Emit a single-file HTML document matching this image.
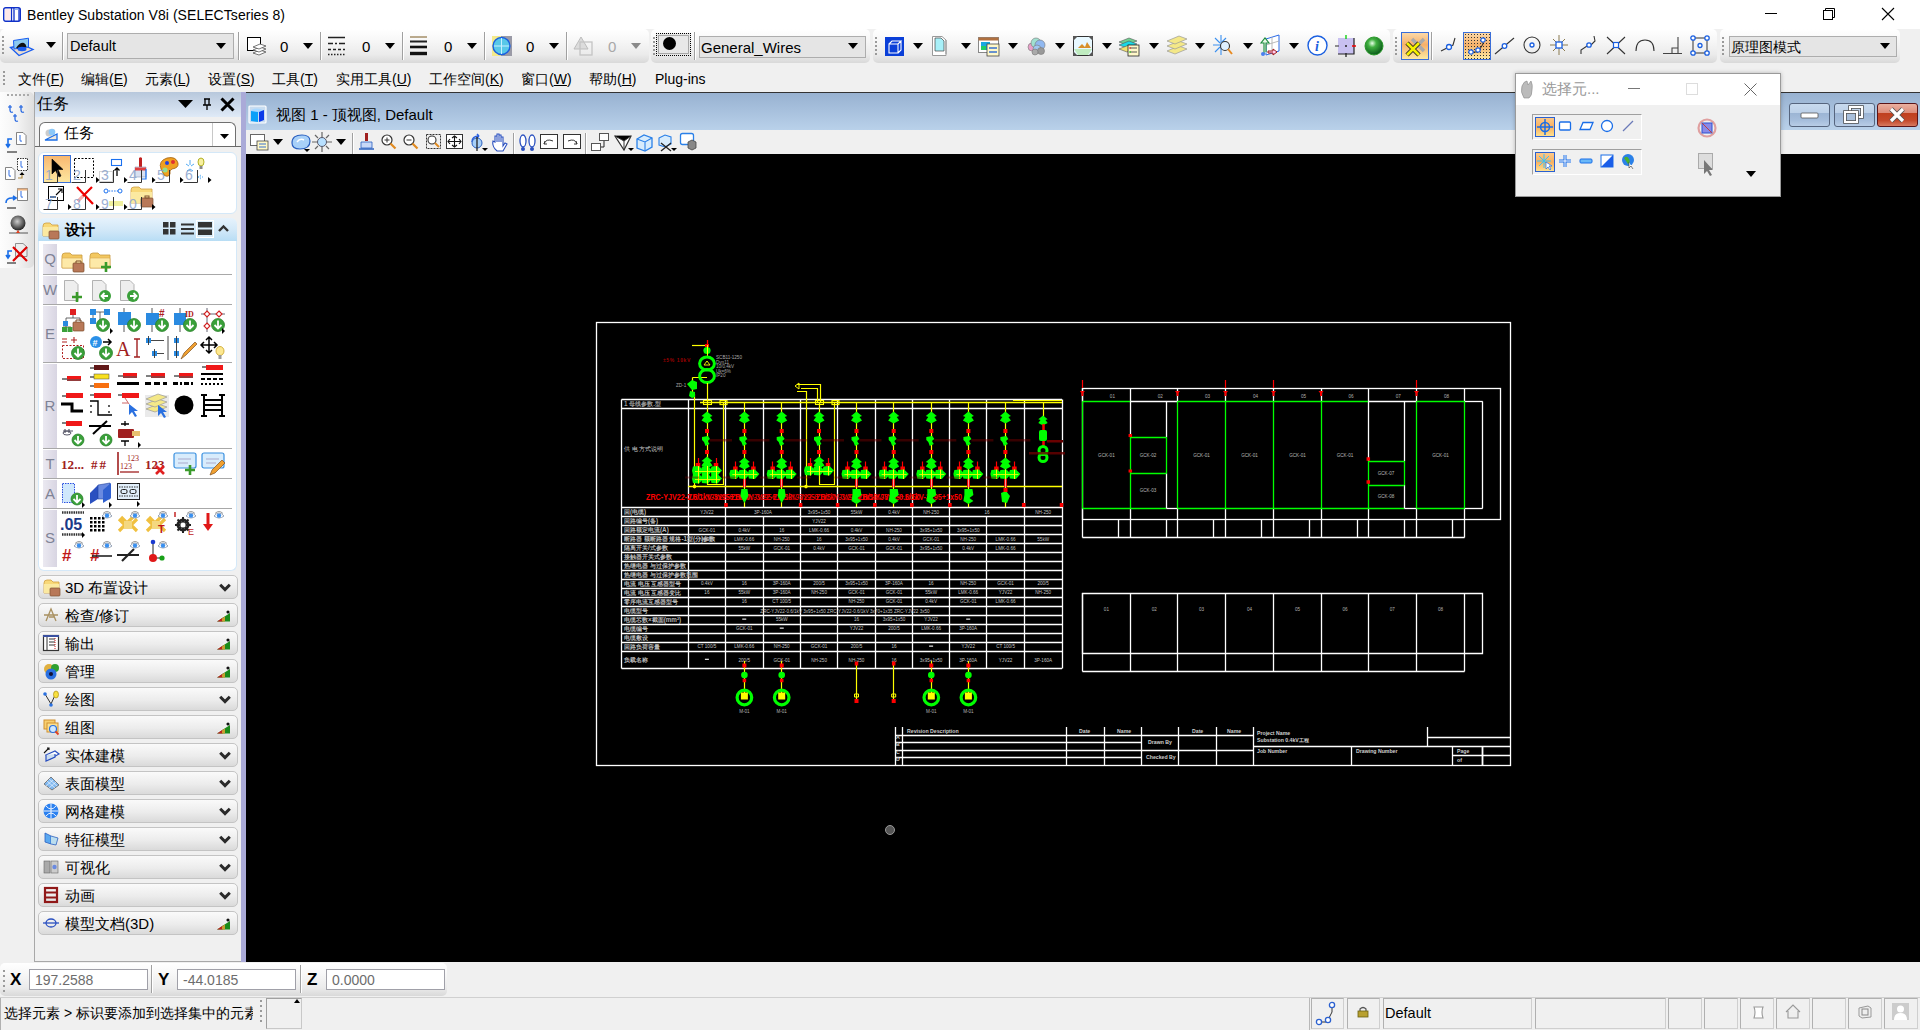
<!DOCTYPE html>
<html><head><meta charset="utf-8"><style>
*{margin:0;padding:0;box-sizing:border-box}
html,body{width:1920px;height:1030px;overflow:hidden;background:#f0f0f0;font-family:"Liberation Sans",sans-serif;color:#000}
.a{position:absolute}
svg.a{overflow:visible}
.tg{position:absolute;top:29px;height:34px;border-radius:5px;background:linear-gradient(#ffffff,#f8f8f8 30%,#ebebeb 75%,#d9d9d9)}
.mi{position:absolute;top:7px;font-size:14px;white-space:nowrap}
.cb{position:absolute;background:#e5e5e5;border:1px solid #adadad;font-size:15px;white-space:nowrap}
.num{position:absolute;top:38px;font-size:15px}
.sec{position:absolute;left:38px;width:200px;height:24px;border:1px solid #c4c4c4;border-radius:5px;background:linear-gradient(#fafafa,#ececec 55%,#dadada);font-size:15px}
.sec span{position:absolute;left:26px;top:3px;white-space:nowrap}
.chev{position:absolute;left:180px;top:6px}
.lt{position:absolute;left:5px;width:14px;color:#7f8396;font-size:15px;text-align:center}
.sbox{position:absolute;top:998px;height:31px;border:1px solid #c8c8c8;border-top-color:#a8a8a8;border-left-color:#a8a8a8}
</style></head><body>
<div class="a" style="left:0;top:0;width:1920px;height:29px;background:#fff"></div>
<svg class="a" style="left:3px;top:7px" width="18" height="15" viewBox="0 0 18 15"><rect x="0.7" y="0.7" width="16.6" height="13.6" rx="2" fill="#fff" stroke="#1030c8" stroke-width="1.4"/><path d="M8.5 0.7V14.3M11 1V14M16 1V14" stroke="#1030c8" stroke-width="1.3"/><rect x="2" y="2" width="5.5" height="11" fill="#fde8e8"/><rect x="11.5" y="1.5" width="4" height="1.5" fill="#90b0f0"/></svg>
<div class="a" style="left:27px;top:6.5px;font-size:14px;white-space:nowrap;letter-spacing:0.05px">Bentley Substation V8i (SELECTseries 8)</div>
<div class="a" style="left:1765px;top:13px;width:12px;height:1px;background:#000"></div>
<svg class="a" style="left:1823px;top:8px" width="12" height="12" viewBox="0 0 12 12"><rect x="0.5" y="2.5" width="9" height="9" fill="none" stroke="#000"/><path d="M2.5 2.5V0.5H11.5V9.5H9.5" fill="none" stroke="#000"/></svg>
<svg class="a" style="left:1882px;top:8px" width="12" height="12" viewBox="0 0 12 12"><path d="M0 0L12 12M12 0L0 12" stroke="#000" stroke-width="1.1"/></svg>
<div class="a" style="left:0;top:29px;width:1920px;height:34px;background:#f0f0f0"></div>
<div class="tg" style="left:0px;width:649px"></div>
<div class="tg" style="left:651px;width:219px"></div>
<div class="tg" style="left:873px;width:517px"></div>
<div class="tg" style="left:1393px;width:324px"></div>
<div class="tg" style="left:1720px;width:180px"></div>
<div class="a" style="left:2px;top:36px;width:2px;height:2px;background:#9a9a9a"></div><div class="a" style="left:2px;top:40px;width:2px;height:2px;background:#9a9a9a"></div><div class="a" style="left:2px;top:44px;width:2px;height:2px;background:#9a9a9a"></div><div class="a" style="left:2px;top:48px;width:2px;height:2px;background:#9a9a9a"></div><div class="a" style="left:2px;top:52px;width:2px;height:2px;background:#9a9a9a"></div>
<svg class="a" style="left:9px;top:37px" width="25" height="20" viewBox="0 0 25 20"><path d="M1.5 10.5L10 18.5L24 12.5L14 8Z" fill="#eadccc" stroke="#1a5ef0" stroke-width="1.3"/><path d="M4.5 3.5L19.5 1.2V10L5 12Z" fill="#8ccaf0" stroke="#1a5ef0" stroke-width="1"/><path d="M7 11Q11 5 15 6Q17 7 17.5 10L10 12Z" fill="#111"/><ellipse cx="13" cy="12" rx="4.5" ry="2.2" fill="#1a5ef0"/></svg>
<div class="a" style="left:46px;top:42px;width:0;height:0;border-left:5px solid transparent;border-right:5px solid transparent;border-top:6px solid #000"></div>
<div class="a" style="left:62px;top:32px;width:2px;height:28px;border-left:1px solid #a0a0a0;border-right:1px solid #fff"></div>
<div class="cb" style="left:67px;top:33px;width:167px;height:26px"><span class="a" style="left:2px;top:4px;font-size:14.5px">Default</span></div>
<div class="a" style="left:216px;top:43px;width:0;height:0;border-left:5px solid transparent;border-right:5px solid transparent;border-top:6px solid #000"></div>
<div class="a" style="left:238px;top:32px;width:2px;height:28px;border-left:1px solid #a0a0a0;border-right:1px solid #fff"></div>
<svg class="a" style="left:247px;top:37px" width="20" height="20" viewBox="0 0 20 20"><rect x="0.5" y="0.5" width="13" height="13" fill="#fff" stroke="#000"/><g fill="#fff" stroke="#555" stroke-width="0.8"><path d="M6 16l7-3 6 2-7 3z"/><path d="M6 13l7-3 6 2-7 3z"/><path d="M6 10l7-3 6 2-7 3z"/></g></svg>
<div class="num" style="left:280px">0</div>
<div class="a" style="left:303px;top:43px;width:0;height:0;border-left:5px solid transparent;border-right:5px solid transparent;border-top:6px solid #000"></div>
<div class="a" style="left:320px;top:32px;width:2px;height:28px;border-left:1px solid #a0a0a0;border-right:1px solid #fff"></div>
<svg class="a" style="left:328px;top:36px" width="18" height="20" viewBox="0 0 18 20"><g stroke="#222" stroke-width="1.5"><path d="M0 1.5H17"/><path d="M0 7.5H5M7 7.5H9M11 7.5H17" /><path d="M0 13.5H3M5 13.5H8M10 13.5H13M15 13.5H17"/><path d="M0 18.5H17" stroke-dasharray="1.5 1.5"/></g></svg>
<div class="num" style="left:362px">0</div>
<div class="a" style="left:385px;top:43px;width:0;height:0;border-left:5px solid transparent;border-right:5px solid transparent;border-top:6px solid #000"></div>
<div class="a" style="left:402px;top:32px;width:2px;height:28px;border-left:1px solid #a0a0a0;border-right:1px solid #fff"></div>
<svg class="a" style="left:410px;top:36px" width="18" height="20" viewBox="0 0 18 20"><path d="M0 1H17" stroke="#7a5a20" stroke-width="1"/><path d="M0 5.5H17" stroke="#222" stroke-width="2"/><path d="M0 11H17" stroke="#111" stroke-width="2.6"/><path d="M0 17.5H17" stroke="#111" stroke-width="3.4"/></svg>
<div class="num" style="left:444px">0</div>
<div class="a" style="left:467px;top:43px;width:0;height:0;border-left:5px solid transparent;border-right:5px solid transparent;border-top:6px solid #000"></div>
<div class="a" style="left:484px;top:32px;width:2px;height:28px;border-left:1px solid #a0a0a0;border-right:1px solid #fff"></div>
<svg class="a" style="left:492px;top:36px" width="21" height="21" viewBox="0 0 21 21"><rect x="0" y="0" width="20" height="20" fill="#f3e98a"/><rect x="9" y="0" width="11" height="20" fill="#9a9aa6"/><circle cx="9.5" cy="10" r="8.5" fill="#58c8e8" stroke="#1a5fe0" stroke-width="1.4"/><path d="M9.5 2v16M2 10h15" stroke="#c8f0ff" stroke-width="1"/></svg>
<div class="num" style="left:526px">0</div>
<div class="a" style="left:549px;top:43px;width:0;height:0;border-left:5px solid transparent;border-right:5px solid transparent;border-top:6px solid #000"></div>
<div class="a" style="left:566px;top:32px;width:2px;height:28px;border-left:1px solid #a0a0a0;border-right:1px solid #fff"></div>
<svg class="a" style="left:573px;top:36px" width="21" height="21" viewBox="0 0 21 21"><path d="M8 1L1 13H15Z" fill="#dcdcdc" stroke="#bdbdbd"/><rect x="7" y="6" width="12" height="13" fill="none" stroke="#c4c4c4" stroke-width="1.3"/></svg>
<div class="num" style="left:608px;color:#a8a8a8">0</div>
<div class="a" style="left:631px;top:43px;width:0;height:0;border-left:5px solid transparent;border-right:5px solid transparent;border-top:6px solid #8a8a8a"></div>
<div class="a" style="left:653px;top:37px;width:2px;height:2px;background:#9a9a9a"></div><div class="a" style="left:653px;top:41px;width:2px;height:2px;background:#9a9a9a"></div><div class="a" style="left:653px;top:45px;width:2px;height:2px;background:#9a9a9a"></div><div class="a" style="left:653px;top:49px;width:2px;height:2px;background:#9a9a9a"></div><div class="a" style="left:653px;top:53px;width:2px;height:2px;background:#9a9a9a"></div>
<div class="a" style="left:656px;top:33px;width:35px;height:23px;border:1px dotted #000;background:#e8e8e8"></div>
<div class="a" style="left:658px;top:35px;width:31px;height:19px;border:1px solid #a8a8a8"></div>
<div class="a" style="left:663px;top:37px;width:13px;height:13px;border-radius:50%;background:#000"></div>
<div class="a" style="left:694px;top:32px;width:2px;height:28px;border-left:1px solid #a0a0a0;border-right:1px solid #fff"></div>
<div class="cb" style="left:699px;top:36px;width:167px;height:22px"><span class="a" style="left:1px;top:2px">General_Wires</span></div>
<div class="a" style="left:848px;top:43px;width:0;height:0;border-left:5px solid transparent;border-right:5px solid transparent;border-top:6px solid #000"></div>
<div class="a" style="left:875px;top:37px;width:2px;height:2px;background:#9a9a9a"></div><div class="a" style="left:875px;top:41px;width:2px;height:2px;background:#9a9a9a"></div><div class="a" style="left:875px;top:45px;width:2px;height:2px;background:#9a9a9a"></div><div class="a" style="left:875px;top:49px;width:2px;height:2px;background:#9a9a9a"></div><div class="a" style="left:875px;top:53px;width:2px;height:2px;background:#9a9a9a"></div>
<svg class="a" style="left:885px;top:37px" width="20" height="19" viewBox="0 0 20 19"><rect x="0" y="0" width="19" height="19" fill="#0a3fd8"/><path d="M4 7h9v9H4zM4 7l3-3h9l-3 3M13 16l3-3V4" fill="none" stroke="#fff" stroke-width="1.1"/></svg>
<div class="a" style="left:913px;top:43px;width:0;height:0;border-left:5px solid transparent;border-right:5px solid transparent;border-top:6px solid #000"></div>
<svg class="a" style="left:932px;top:36px" width="20" height="21" viewBox="0 0 20 21"><path d="M0.5 0.5H10L14 4V19.5H0.5Z" fill="#fff" stroke="#999"/><path d="M3 2H9L12 5V15H3Z" fill="#a8f0f8" stroke="#444" stroke-width="0.7"/><path d="M14 4V18" stroke="#999" /><path d="M6 3h6l6 6v12H6" fill="#fff" stroke="#999" opacity="0.0"/></svg>
<div class="a" style="left:961px;top:43px;width:0;height:0;border-left:5px solid transparent;border-right:5px solid transparent;border-top:6px solid #000"></div>
<svg class="a" style="left:978px;top:37px" width="22" height="20" viewBox="0 0 22 20"><rect x="0.5" y="0.5" width="20" height="15" fill="#fff" stroke="#888"/><rect x="0.5" y="0.5" width="20" height="3" fill="#b07040"/><rect x="3" y="5" width="9" height="8" fill="#1aa8e0"/><rect x="3" y="9" width="5" height="4" fill="#22cc66"/><rect x="9" y="7" width="12" height="12" fill="#fff8c8" stroke="#444" stroke-width="0.8"/><path d="M11 11h8M11 15h8" stroke="#3870d0" stroke-width="1.4"/></svg>
<div class="a" style="left:1008px;top:43px;width:0;height:0;border-left:5px solid transparent;border-right:5px solid transparent;border-top:6px solid #000"></div>
<svg class="a" style="left:1026px;top:37px" width="20" height="19" viewBox="0 0 20 19"><g stroke="#777" stroke-width="0.6"><circle cx="6" cy="10" r="4" fill="#e8a0c8"/><circle cx="10" cy="6" r="5" fill="#a0e0d0"/><circle cx="14" cy="8" r="5" fill="#90b8f0"/><circle cx="11" cy="12" r="4" fill="#a0c8f0"/><circle cx="15" cy="14" r="3.5" fill="#999"/><circle cx="9" cy="15" r="3" fill="#aaa"/></g></svg>
<div class="a" style="left:1055px;top:43px;width:0;height:0;border-left:5px solid transparent;border-right:5px solid transparent;border-top:6px solid #000"></div>
<svg class="a" style="left:1073px;top:36px" width="20" height="20" viewBox="0 0 20 20"><rect x="0.5" y="0.5" width="19" height="19" fill="#e8f8ff" stroke="#333"/><path d="M0 0l5 0-5 5zM20 0l-5 0 5 5zM0 20l5 0-5-5zM20 20l-5 0 5-5z" fill="#555"/><path d="M5 12l4-4 3 3 2-5 4 6z" fill="#d8902a"/><path d="M1 13h18l-4 6H5z" fill="#c0ecc0"/></svg>
<div class="a" style="left:1102px;top:43px;width:0;height:0;border-left:5px solid transparent;border-right:5px solid transparent;border-top:6px solid #000"></div>
<svg class="a" style="left:1118px;top:36px" width="22" height="21" viewBox="0 0 22 21"><path d="M1 6l10-4 8 3-10 4z" fill="#70d090" stroke="#555" stroke-width="0.6"/><path d="M1 9l10-4 8 3-10 4z" fill="#18d8e8" stroke="#555" stroke-width="0.6"/><path d="M1 13l10-4 8 3-10 4z" fill="#f0e070" stroke="#555" stroke-width="0.6"/><rect x="10" y="9" width="11" height="11" fill="#fff8c8" stroke="#222" stroke-width="0.8"/><path d="M12 12h7M12 16h7" stroke="#555"/><circle cx="12" cy="12" r="0.8" fill="red"/><circle cx="12" cy="16" r="0.8" fill="#0c0"/></svg>
<div class="a" style="left:1149px;top:43px;width:0;height:0;border-left:5px solid transparent;border-right:5px solid transparent;border-top:6px solid #000"></div>
<svg class="a" style="left:1166px;top:36px" width="22" height="20" viewBox="0 0 22 20"><g fill="#f4e888" stroke="#999" stroke-width="0.7"><path d="M1 15l12-5 8 3-12 5z"/><path d="M1 10l12-5 8 3-12 5z"/><path d="M1 5l12-5 8 3-12 5z"/></g></svg>
<div class="a" style="left:1195px;top:43px;width:0;height:0;border-left:5px solid transparent;border-right:5px solid transparent;border-top:6px solid #000"></div>
<svg class="a" style="left:1212px;top:34px" width="22" height="23" viewBox="0 0 22 23"><path d="M9 1v20M1 11h8M3 4l5 5M3 18l5-5M14 4l-4 4" stroke="#3a90f0" stroke-width="1.1"/><circle cx="13" cy="12" r="4.5" fill="#dff0ff" stroke="#333" stroke-width="1.1"/><path d="M16 15l4 5" stroke="#e88a20" stroke-width="2"/></svg>
<div class="a" style="left:1243px;top:43px;width:0;height:0;border-left:5px solid transparent;border-right:5px solid transparent;border-top:6px solid #000"></div>
<svg class="a" style="left:1260px;top:34px" width="20" height="23" viewBox="0 0 20 23"><path d="M6 5l13-4v16l-13 4z" fill="#fff" stroke="#2a6ae8" stroke-width="1"/><path d="M12 3v16M6 11l13-4" stroke="#aaa" stroke-width="0.8"/><path d="M4 20V9H1l4-5 4 5H6v9" fill="#e8f8e8" stroke="#1a8a3a" stroke-width="1.1"/><path d="M8 17h5v-2l4 3-4 3v-2H8z" fill="#fce" stroke="#a01818" stroke-width="1"/><circle cx="3" cy="20" r="2" fill="#4a80f0"/></svg>
<div class="a" style="left:1289px;top:43px;width:0;height:0;border-left:5px solid transparent;border-right:5px solid transparent;border-top:6px solid #000"></div>
<svg class="a" style="left:1307px;top:35px" width="21" height="21" viewBox="0 0 21 21"><circle cx="10.5" cy="10.5" r="9.5" fill="#fff" stroke="#1a5fe0" stroke-width="1.4"/><text x="8" y="16" font-family="Liberation Serif" font-style="italic" font-weight="bold" font-size="14" fill="#1a5fe0">i</text></svg>
<svg class="a" style="left:1335px;top:35px" width="21" height="22" viewBox="0 0 21 22"><rect x="3" y="3" width="16" height="16" fill="#c8c0f0"/><path d="M19 3v16H3" fill="none" stroke="#222" stroke-width="1.2"/><path d="M11 0v4" stroke="#0c0" stroke-width="1.3"/><path d="M17 11h4" stroke="#e00" stroke-width="1.5"/><path d="M0 11h4" stroke="#555" stroke-width="1.3"/><path d="M11 18v4" stroke="#222" stroke-width="1.3"/><circle cx="11" cy="11" r="1" fill="#222"/></svg>
<svg class="a" style="left:1364px;top:36px" width="20" height="20" viewBox="0 0 20 20"><defs><radialGradient id="gg" cx="40%" cy="35%" r="65%"><stop offset="0" stop-color="#e8ffe8"/><stop offset="0.35" stop-color="#40b040"/><stop offset="1" stop-color="#0a5a1a"/></radialGradient></defs><circle cx="10" cy="10" r="9" fill="url(#gg)" stroke="#2a9a2a"/></svg>
<div class="a" style="left:1395px;top:37px;width:2px;height:2px;background:#9a9a9a"></div><div class="a" style="left:1395px;top:41px;width:2px;height:2px;background:#9a9a9a"></div><div class="a" style="left:1395px;top:45px;width:2px;height:2px;background:#9a9a9a"></div><div class="a" style="left:1395px;top:49px;width:2px;height:2px;background:#9a9a9a"></div><div class="a" style="left:1395px;top:53px;width:2px;height:2px;background:#9a9a9a"></div>
<div class="a" style="left:1401px;top:32px;width:28px;height:28px;border:1px solid #3a6ed8;background:linear-gradient(#fbd9a8,#f6b06a 45%,#fde9a0)"></div>
<svg class="a" style="left:1404px;top:35px" width="22" height="22" viewBox="0 0 22 22"><path d="M8 4l12 12M20 4L8 16" stroke="#aaa" stroke-width="3.5"/><path d="M3 8l12 12M15 8L3 20" stroke="#222" stroke-width="4.5"/><path d="M3 8l12 12M15 8L3 20" stroke="#f4f000" stroke-width="2.8"/></svg>
<div class="a" style="left:1431px;top:32px;width:2px;height:28px;border-left:1px solid #a0a0a0;border-right:1px solid #fff"></div>
<svg class="a" style="left:1441px;top:37px" width="17" height="17" viewBox="0 0 17 17"><path d="M0 14l8-4 4-2 2-7" fill="none" stroke="#333" stroke-width="1.1"/><circle cx="8" cy="10" r="2.5" fill="#fff" stroke="#1a5fe0" stroke-width="1.3"/></svg>
<div class="a" style="left:1463px;top:32px;width:28px;height:28px;border:1px solid #3a6ed8;background:radial-gradient(circle,#333 0.7px,transparent 0.9px) 0 0/3px 3px,linear-gradient(#fbd9a8,#f6b06a 45%,#fde9a0)"></div>
<svg class="a" style="left:1467px;top:36px" width="20" height="20" viewBox="0 0 20 20"><path d="M4 16h7l5-8V3" fill="none" stroke="#222" stroke-width="1"/><g fill="#fff" stroke="#1a5fe0" stroke-width="1.2"><circle cx="4" cy="16" r="2.2"/><circle cx="11" cy="14" r="2.2"/><circle cx="16" cy="4" r="2.2"/></g></svg>
<svg class="a" style="left:1495px;top:36px" width="20" height="20" viewBox="0 0 20 20"><path d="M0 18L19 2" stroke="#333" stroke-width="1.1"/><circle cx="9.5" cy="10" r="2.3" fill="#fff" stroke="#1a5fe0" stroke-width="1.3"/></svg>
<svg class="a" style="left:1523px;top:36px" width="18" height="18" viewBox="0 0 18 18"><circle cx="9" cy="9" r="8" fill="none" stroke="#333" stroke-width="1.1"/><circle cx="9" cy="9" r="2" fill="#fff" stroke="#1a5fe0" stroke-width="1.3"/></svg>
<svg class="a" style="left:1550px;top:35px" width="18" height="20" viewBox="0 0 18 20"><path d="M9 0v20M0 10h18M3 4l12 12M15 4L3 16" stroke="#8a7a50" stroke-width="1"/><rect x="6" y="7" width="6" height="6" fill="#fff" stroke="#1a5fe0" stroke-width="1.3"/></svg>
<svg class="a" style="left:1580px;top:35px" width="18" height="20" viewBox="0 0 18 20"><path d="M1 19v-4l6-4 4-1 4-4-1-5" fill="none" stroke="#333" stroke-width="1.1"/><circle cx="9" cy="10" r="2.2" fill="#fff" stroke="#1a5fe0" stroke-width="1.3"/></svg>
<svg class="a" style="left:1607px;top:36px" width="19" height="19" viewBox="0 0 19 19"><path d="M0 1L18 18M18 1L0 18" stroke="#333" stroke-width="1.1"/><rect x="6.5" y="6.5" width="5" height="5" fill="#fff" stroke="#1a5fe0" stroke-width="1.2"/></svg>
<svg class="a" style="left:1635px;top:38px" width="20" height="14" viewBox="0 0 20 14"><path d="M1 13Q1 2 10 2Q19 2 19 13" fill="none" stroke="#333" stroke-width="1.1"/></svg>
<svg class="a" style="left:1663px;top:37px" width="20" height="18" viewBox="0 0 20 18"><path d="M0 16.5H19M15 0V16.5M9 16.5V11H15" fill="none" stroke="#444" stroke-width="1.1"/></svg>
<svg class="a" style="left:1690px;top:35px" width="21" height="22" viewBox="0 0 21 22"><rect x="3" y="3" width="14" height="15" fill="none" stroke="#444" stroke-width="1.1"/><g fill="#fff" stroke="#1a5fe0" stroke-width="1.3"><circle cx="3" cy="3" r="2.2"/><circle cx="17" cy="3" r="2.2"/><circle cx="3" cy="18" r="2.2"/><circle cx="17" cy="18" r="2.2"/><circle cx="10" cy="10.5" r="2"/></g></svg>
<div class="a" style="left:1722px;top:37px;width:2px;height:2px;background:#9a9a9a"></div><div class="a" style="left:1722px;top:41px;width:2px;height:2px;background:#9a9a9a"></div><div class="a" style="left:1722px;top:45px;width:2px;height:2px;background:#9a9a9a"></div><div class="a" style="left:1722px;top:49px;width:2px;height:2px;background:#9a9a9a"></div><div class="a" style="left:1722px;top:53px;width:2px;height:2px;background:#9a9a9a"></div>
<div class="cb" style="left:1729px;top:36px;width:168px;height:21px"><span class="a" style="left:1px;top:2px;font-size:14px">原理图模式</span></div>
<div class="a" style="left:1880px;top:43px;width:0;height:0;border-left:5px solid transparent;border-right:5px solid transparent;border-top:6px solid #000"></div>
<div class="a" style="left:0;top:63px;width:1920px;height:29px;background:#f0f0f0"></div>
<div class="a" style="left:3px;top:71px;width:2px;height:2px;background:#9a9a9a"></div><div class="a" style="left:3px;top:75px;width:2px;height:2px;background:#9a9a9a"></div><div class="a" style="left:3px;top:79px;width:2px;height:2px;background:#9a9a9a"></div><div class="a" style="left:3px;top:83px;width:2px;height:2px;background:#9a9a9a"></div>
<div class="a" style="left:18px;top:71px;font-size:14px;white-space:nowrap">文件(<u>F</u>)</div>
<div class="a" style="left:81px;top:71px;font-size:14px;white-space:nowrap">编辑(<u>E</u>)</div>
<div class="a" style="left:145px;top:71px;font-size:14px;white-space:nowrap">元素(<u>L</u>)</div>
<div class="a" style="left:208px;top:71px;font-size:14px;white-space:nowrap">设置(<u>S</u>)</div>
<div class="a" style="left:272px;top:71px;font-size:14px;white-space:nowrap">工具(<u>T</u>)</div>
<div class="a" style="left:336px;top:71px;font-size:14px;white-space:nowrap">实用工具(<u>U</u>)</div>
<div class="a" style="left:429px;top:71px;font-size:14px;white-space:nowrap">工作空间(<u>K</u>)</div>
<div class="a" style="left:521px;top:71px;font-size:14px;white-space:nowrap">窗口(<u>W</u>)</div>
<div class="a" style="left:589px;top:71px;font-size:14px;white-space:nowrap">帮助(<u>H</u>)</div>
<div class="a" style="left:655px;top:71px;font-size:14px;white-space:nowrap">Plug-ins</div>
<div class="a" style="left:0;top:92px;width:34px;height:176px;border-radius:0 5px 5px 0;background:linear-gradient(90deg,#fdfdfd,#f4f4f4 50%,#dedede)"></div>
<div class="a" style="left:7px;top:94px;width:2px;height:2px;background:#aaa"></div>
<div class="a" style="left:11px;top:94px;width:2px;height:2px;background:#aaa"></div>
<div class="a" style="left:15px;top:94px;width:2px;height:2px;background:#aaa"></div>
<div class="a" style="left:19px;top:94px;width:2px;height:2px;background:#aaa"></div>
<div class="a" style="left:23px;top:94px;width:2px;height:2px;background:#aaa"></div>
<div class="a" style="left:27px;top:94px;width:2px;height:2px;background:#aaa"></div>
<svg class="a" style="left:7px;top:104px" width="22" height="20" viewBox="0 0 22 20"><g transform="translate(1,1)"><path d="M2 0v5M0 2h4M2 5q0 3 3 2" fill="none" stroke="#1a5fe0" stroke-width="1.2"/></g><g transform="translate(12,1)"><path d="M2 0v5M0 2h4M2 5q0 3 3 2" fill="none" stroke="#1a5fe0" stroke-width="1.2"/></g><g transform="translate(6,10)"><path d="M2 0v5M0 2h4M2 5q0 3 3 2" fill="none" stroke="#1a5fe0" stroke-width="1.2"/></g></svg>
<svg class="a" style="left:5px;top:131px" width="24" height="22" viewBox="0 0 24 22"><g transform="translate(11,1)"><path d="M0.5 0.5H7L10 3.5V12.5H0.5Z" fill="#fff" stroke="#666" stroke-width="0.8"/><path d="M4 3v5q0 2 2 1" fill="none" stroke="#1a5fe0" stroke-width="0.9"/></g><path d="M7 8H3v8M1 13l2 3 2-3" fill="none" stroke="#1a6ee8" stroke-width="1.6"/><path d="M2 21h10" stroke="#333" stroke-width="1.2"/></svg>
<svg class="a" style="left:4px;top:157px" width="26" height="25" viewBox="0 0 26 25"><g transform="translate(13,1)"><rect x="0.5" y="0.5" width="10" height="12" fill="#fff" stroke="#333" stroke-dasharray="1.5 1"/><path d="M4 3v5q0 2 2 1" fill="none" stroke="#1a5fe0" stroke-width="0.9"/></g><g transform="translate(1,10)"><path d="M0.5 0.5H7L10 3.5V12.5H0.5Z" fill="#fff" stroke="#666" stroke-width="0.8"/><path d="M4 3v5q0 2 2 1" fill="none" stroke="#1a5fe0" stroke-width="0.9"/></g><path d="M18 16v5h-4" fill="none" stroke="#b08a40" stroke-width="1.2"/><path d="M15.5 18l2.5-3 2.5 3" fill="#000"/></svg>
<svg class="a" style="left:5px;top:188px" width="24" height="22" viewBox="0 0 24 22"><g transform="translate(12,0)"><path d="M0.5 0.5H10.5V12.5H0.5Z" fill="#fff" stroke="#666" stroke-width="0.8"/><rect x="0.5" y="0.5" width="10" height="2" fill="#e8b080"/><path d="M4 3v5q0 2 2 1" fill="none" stroke="#1a5fe0" stroke-width="0.9"/></g><path d="M1 15q0-5 6-5h3M8 8l3 2-3 2" fill="none" stroke="#1a6ee8" stroke-width="1.6"/><path d="M2 20h9" stroke="#333" stroke-width="1.2"/></svg>
<svg class="a" style="left:8px;top:215px" width="22" height="22" viewBox="0 0 22 22"><defs><radialGradient id="gl" cx="45%" cy="40%" r="60%"><stop offset="0" stop-color="#ccc"/><stop offset="1" stop-color="#222"/></radialGradient></defs><circle cx="10" cy="8" r="7.5" fill="url(#gl)"/><path d="M1 18h19" stroke="#555" stroke-width="1"/><path d="M8 18l2-3 2 3z" fill="#e04020"/></svg>
<svg class="a" style="left:5px;top:242px" width="24" height="22" viewBox="0 0 24 22"><g transform="translate(10,1)"><path d="M0.5 0.5H8L12 4V13.5H0.5Z" fill="#eee" stroke="#777" stroke-width="0.8"/></g><path d="M8 5l14 14M22 5L8 19" stroke="#d00" stroke-width="2.2"/><path d="M7 9H3v7M1 13l2 3 2-3" fill="none" stroke="#1a6ee8" stroke-width="1.6"/><path d="M2 21h9" stroke="#333" stroke-width="1.2"/></svg>
<div class="a" style="left:34px;top:92px;width:207px;height:870px;background:#f0f0f0;border-left:1px solid #a8a8a8;border-bottom:1px solid #a8a8a8"></div>
<div class="a" style="left:35px;top:92px;width:206px;height:25px;background:linear-gradient(#b8c8dc,#dfeaf7)"></div>
<div class="a" style="left:37px;top:94px;font-size:16px;white-space:nowrap">任务</div>
<svg class="a" style="left:178px;top:100px" width="15" height="8" viewBox="0 0 15 8"><path d="M0 0H15L7.5 8Z" fill="#000"/></svg>
<svg class="a" style="left:203px;top:98px" width="8" height="12" viewBox="0 0 8 12"><path d="M1 1H7M2 1V7H6V1M0 7H8M4 7V12" fill="none" stroke="#000" stroke-width="1.3"/></svg>
<svg class="a" style="left:220px;top:97px" width="15" height="15" viewBox="0 0 15 15"><path d="M1.5 1.5L13.5 13.5M13.5 1.5L1.5 13.5" stroke="#000" stroke-width="3"/></svg>
<div class="a" style="left:39px;top:122px;width:197px;height:25px;background:#fff;border:1px solid #707070;border-bottom:none;border-radius:6px 6px 0 0"></div>
<div class="a" style="left:35px;top:146px;width:206px;height:1px;background:#6a6a6a"></div>
<div class="a" style="left:212px;top:123px;width:1px;height:23px;background:#c8c8c8"></div>
<svg class="a" style="left:44px;top:128px" width="15" height="13" viewBox="0 0 15 13"><circle cx="5" cy="5" r="3.5" fill="#999" opacity="0.5"/><circle cx="8" cy="4" r="3.3" fill="#8cc8f8"/><path d="M1 12L13 6V12Z" fill="#f0e8dc" stroke="#1a6ee8" stroke-width="1.3"/></svg>
<div class="a" style="left:64px;top:124px;font-size:15px;white-space:nowrap">任务</div>
<svg class="a" style="left:220px;top:134px" width="9" height="5" viewBox="0 0 9 5"><path d="M0 0H9L4.5 5Z" fill="#000"/></svg>
<div class="a" style="left:38px;top:152px;width:199px;height:62px;background:#fff;border:1px solid #d4e8f8;border-radius:6px"></div>
<div class="a" style="left:43px;top:155px;width:28px;height:28px;border:1px solid #3a70d8;background:linear-gradient(#f8b870,#fde7a0)"></div>
<svg class="a" style="left:51px;top:159px" width="12" height="19" viewBox="0 0 12 19"><path d="M1 0V15L4.5 11.5L8 18L10 17L7 10.5H12Z" fill="#000" stroke="#000" stroke-width="0.6"/></svg>
<svg class="a" style="left:74px;top:158px" width="20" height="20" viewBox="0 0 20 20"><rect x="0.5" y="0.5" width="19" height="19" fill="none" stroke="#000" stroke-dasharray="2 1.5"/></svg>
<svg class="a" style="left:99px;top:159px" width="24" height="24" viewBox="0 0 24 24"><rect x="12.5" y="0.5" width="10" height="6" fill="#fff" stroke="#1a70f0" stroke-width="1.1"/><path d="M18 9v8M15.5 11.5l2.5-2.5 2.5 2.5" fill="none" stroke="#000" stroke-width="1.3"/><rect x="0.5" y="12.5" width="13" height="10" fill="none" stroke="#aaa" stroke-dasharray="1 1"/></svg>
<svg class="a" style="left:133px;top:157px" width="16" height="23" viewBox="0 0 16 23"><path d="M6 1Q7.5 -0.5 9 1V10H6Z" fill="#c02020"/><path d="M2 10H13V20H2Z" fill="#d8e0f0" stroke="#8898b8" stroke-width="0.6"/><path d="M2 12H13" stroke="#e04040" stroke-width="3"/><path d="M13 12v10H9" stroke="#1a70f0" stroke-width="1.2" fill="none"/></svg>
<svg class="a" style="left:158px;top:157px" width="22" height="22" viewBox="0 0 22 22"><path d="M3 12Q0 4 9 1Q18 -1 20 6Q21 11 14 12Q11 13 12 17Q10 21 6 18Z" fill="#f0a020" stroke="#a06010" stroke-width="0.8"/><circle cx="9" cy="6" r="2" fill="#2040e0"/><circle cx="15" cy="5" r="2" fill="#e03030"/><circle cx="7" cy="13" r="2.5" fill="#90e090"/></svg>
<svg class="a" style="left:185px;top:157px" width="24" height="24" viewBox="0 0 24 24"><path d="M5 3v5M1 7l3 2M9 7l-3 2M2 14l3-2M8 14l-3-2" stroke="#40a0f0" stroke-width="0.9"/><ellipse cx="16" cy="5" rx="3" ry="4" fill="#f8f0a0" stroke="#a0a000" stroke-width="0.8"/><rect x="14.5" y="9" width="3" height="3" fill="#888"/><path d="M13 20h5M16 18l-3 2 3 2" stroke="#40a0f0" stroke-width="0.9" fill="none" stroke-dasharray="1 1"/></svg>
<div class="a" style="left:45px;top:167px;font-size:14px;color:#8aa2cc;opacity:0.85">1</div>
<svg class="a" style="left:43px;top:169px" width="30" height="14" viewBox="0 0 30 14"><path d="M0.5 13.5H14.5M14.5 1V13.5" fill="none" stroke="#333" stroke-width="1"/></svg>
<div class="a" style="left:73px;top:167px;font-size:14px;color:#8aa2cc;opacity:0.85">2</div>
<svg class="a" style="left:71px;top:169px" width="30" height="14" viewBox="0 0 30 14"><path d="M0.5 13.5H14.5M14.5 1V13.5" fill="none" stroke="#333" stroke-width="1"/><path d="M25 8l3.5 3-3.5 3z" fill="#000"/></svg>
<div class="a" style="left:101px;top:167px;font-size:14px;color:#8aa2cc;opacity:0.85">3</div>
<svg class="a" style="left:99px;top:169px" width="30" height="14" viewBox="0 0 30 14"><path d="M0.5 13.5H14.5M14.5 1V13.5" fill="none" stroke="#333" stroke-width="1"/><path d="M25 8l3.5 3-3.5 3z" fill="#000"/></svg>
<div class="a" style="left:129px;top:167px;font-size:14px;color:#8aa2cc;opacity:0.85">4</div>
<svg class="a" style="left:127px;top:169px" width="30" height="14" viewBox="0 0 30 14"><path d="M0.5 13.5H14.5M14.5 1V13.5" fill="none" stroke="#333" stroke-width="1"/><path d="M25 8l3.5 3-3.5 3z" fill="#000"/></svg>
<div class="a" style="left:157px;top:167px;font-size:14px;color:#8aa2cc;opacity:0.85">5</div>
<svg class="a" style="left:155px;top:169px" width="30" height="14" viewBox="0 0 30 14"><path d="M0.5 13.5H14.5M14.5 1V13.5" fill="none" stroke="#333" stroke-width="1"/><path d="M25 8l3.5 3-3.5 3z" fill="#000"/></svg>
<div class="a" style="left:185px;top:167px;font-size:14px;color:#8aa2cc;opacity:0.85">6</div>
<svg class="a" style="left:183px;top:169px" width="30" height="14" viewBox="0 0 30 14"><path d="M0.5 13.5H14.5M14.5 1V13.5" fill="none" stroke="#333" stroke-width="1"/><path d="M25 8l3.5 3-3.5 3z" fill="#000"/></svg>
<svg class="a" style="left:48px;top:186px" width="18" height="16" viewBox="0 0 18 16"><rect x="0.5" y="0.5" width="15" height="14" fill="#fff" stroke="#000"/><path d="M2 11h6M8 9l6-6M10 3h4v4" fill="none" stroke="#000" stroke-width="1.1"/><path d="M2 11h6" stroke="#1a70f0" stroke-dasharray="1.5 1"/></svg>
<svg class="a" style="left:75px;top:186px" width="20" height="20" viewBox="0 0 20 20"><path d="M2 1L18 18M17 1L3 15" stroke="#e00" stroke-width="2.2"/><path d="M3 15l5-5" stroke="#f6b0b0" stroke-width="3"/></svg>
<svg class="a" style="left:103px;top:188px" width="22" height="20" viewBox="0 0 22 20"><path d="M3 3h14" stroke="#1a70f0" stroke-dasharray="1.5 1.2"/><circle cx="3" cy="3" r="2" fill="#fff" stroke="#1a70f0"/><circle cx="17" cy="3" r="2" fill="#fff" stroke="#1a70f0"/><rect x="6" y="13" width="14" height="5" fill="#f0f0a0"/></svg>
<svg class="a" style="left:130px;top:186px" width="24" height="22" viewBox="0 0 24 22"><path d="M1 4Q1 1 4 1H9L11 3H22V17H1Z" fill="#f8d878" stroke="#d0a040" stroke-width="0.8"/><rect x="1" y="6" width="21" height="11" fill="#fbe9a0"/><rect x="11" y="12" width="12" height="9" rx="1" fill="#b87858" stroke="#805030" stroke-width="0.7"/><rect x="15" y="10" width="4" height="2" fill="none" stroke="#805030"/></svg>
<div class="a" style="left:45px;top:196px;font-size:14px;color:#8aa2cc;opacity:0.85">7</div>
<svg class="a" style="left:43px;top:196px" width="30" height="14" viewBox="0 0 30 14"><path d="M0.5 13.5H14.5M14.5 1V13.5" fill="none" stroke="#333" stroke-width="1"/><path d="M25 8l3.5 3-3.5 3z" fill="#000"/></svg>
<div class="a" style="left:73px;top:196px;font-size:14px;color:#8aa2cc;opacity:0.85">8</div>
<svg class="a" style="left:71px;top:196px" width="30" height="14" viewBox="0 0 30 14"><path d="M0.5 13.5H14.5M14.5 1V13.5" fill="none" stroke="#333" stroke-width="1"/><path d="M25 8l3.5 3-3.5 3z" fill="#000"/></svg>
<div class="a" style="left:101px;top:196px;font-size:14px;color:#8aa2cc;opacity:0.85">9</div>
<svg class="a" style="left:99px;top:196px" width="30" height="14" viewBox="0 0 30 14"><path d="M0.5 13.5H14.5M14.5 1V13.5" fill="none" stroke="#333" stroke-width="1"/><path d="M25 8l3.5 3-3.5 3z" fill="#000"/></svg>
<div class="a" style="left:129px;top:196px;font-size:14px;color:#8aa2cc;opacity:0.85">0</div>
<svg class="a" style="left:127px;top:196px" width="30" height="14" viewBox="0 0 30 14"><path d="M0.5 13.5H14.5M14.5 1V13.5" fill="none" stroke="#333" stroke-width="1"/><path d="M25 8l3.5 3-3.5 3z" fill="#000"/></svg>
<div class="a" style="left:38px;top:218px;width:199px;height:24px;border-radius:6px 6px 0 0;background:linear-gradient(#e6f2fc,#d2e8f8 50%,#b5dcf4)"></div>
<svg class="a" style="left:42px;top:222px" width="18" height="18" viewBox="0 0 18 18"><path d="M1 4Q1 1 4 1H8L10 3H16V14H1Z" fill="#f8d878" stroke="#d0a040" stroke-width="0.8"/><rect x="1" y="5" width="15" height="9" fill="#fbe9a0"/><rect x="7" y="9" width="10" height="8" rx="1" fill="#b87858" stroke="#805030" stroke-width="0.7"/></svg>
<div class="a" style="left:65px;top:221px;font-size:15px;font-weight:bold;white-space:nowrap">设计</div>
<svg class="a" style="left:163px;top:222px" width="13" height="13" viewBox="0 0 13 13"><rect x="0" y="0" width="5.5" height="5.5" fill="#333"/><rect x="7" y="0" width="5.5" height="5.5" fill="#333"/><rect x="0" y="7" width="5.5" height="5.5" fill="#333"/><rect x="7" y="7" width="5.5" height="5.5" fill="#333"/></svg>
<svg class="a" style="left:181px;top:223px" width="13" height="12" viewBox="0 0 13 12"><path d="M0 1.5H13M0 6H13M0 10.5H13" stroke="#333" stroke-width="2.2"/></svg>
<div class="a" style="left:196px;top:220px;width:18px;height:18px;border:1px solid #fff;background:#d9ecf8"></div>
<svg class="a" style="left:198px;top:222px" width="14" height="13" viewBox="0 0 14 13"><rect x="0" y="0" width="14" height="5.5" fill="#333"/><rect x="0" y="7.5" width="14" height="5.5" fill="#333"/></svg>
<svg class="a" style="left:218px;top:224px" width="11" height="8" viewBox="0 0 11 8"><path d="M1 7L5.5 2.5L10 7" fill="none" stroke="#333" stroke-width="2.4"/></svg>
<div class="a" style="left:38px;top:241px;width:199px;height:330px;background:#fff;border:1px solid #d4e8f8;border-top:none;border-radius:0 0 6px 6px"></div>
<div class="a" style="left:43px;top:244px;width:14px;height:30px;background:linear-gradient(90deg,#ebe9f1,#d8d5e2)"></div>
<div class="lt" style="left:43px;top:250px">Q</div>
<div class="a" style="left:43px;top:276px;width:14px;height:28px;background:linear-gradient(90deg,#ebe9f1,#d8d5e2)"></div>
<div class="lt" style="left:43px;top:281px">W</div>
<div class="a" style="left:43px;top:306px;width:14px;height:56px;background:linear-gradient(90deg,#ebe9f1,#d8d5e2)"></div>
<div class="lt" style="left:43px;top:325px">E</div>
<div class="a" style="left:43px;top:364px;width:14px;height:84px;background:linear-gradient(90deg,#ebe9f1,#d8d5e2)"></div>
<div class="lt" style="left:43px;top:397px">R</div>
<div class="a" style="left:43px;top:450px;width:14px;height:28px;background:linear-gradient(90deg,#ebe9f1,#d8d5e2)"></div>
<div class="lt" style="left:43px;top:455px">T</div>
<div class="a" style="left:43px;top:480px;width:14px;height:28px;background:linear-gradient(90deg,#ebe9f1,#d8d5e2)"></div>
<div class="lt" style="left:43px;top:485px">A</div>
<div class="a" style="left:43px;top:510px;width:14px;height:57px;background:linear-gradient(90deg,#ebe9f1,#d8d5e2)"></div>
<div class="lt" style="left:43px;top:529px">S</div>
<div class="a" style="left:43px;top:274px;width:189px;height:1px;background:#a8a8a8"></div>
<div class="a" style="left:43px;top:304px;width:189px;height:1px;background:#a8a8a8"></div>
<div class="a" style="left:43px;top:362px;width:189px;height:1px;background:#a8a8a8"></div>
<div class="a" style="left:43px;top:448px;width:189px;height:1px;background:#a8a8a8"></div>
<div class="a" style="left:43px;top:478px;width:189px;height:1px;background:#a8a8a8"></div>
<div class="a" style="left:43px;top:508px;width:189px;height:1px;background:#a8a8a8"></div>
<svg class="a" style="left:61px;top:251px" width="24" height="22" viewBox="0 0 24 22"><path d="M1 5Q1 2 4 2H9L11 4H21V17H1Z" fill="#f3c860" stroke="#c89a40" stroke-width="0.8"/><rect x="1" y="7" width="20" height="10" rx="1" fill="#fde9a8" stroke="#d8aa50" stroke-width="0.6"/><rect x="12" y="12" width="11" height="9" rx="1" fill="#b87858" stroke="#7a4a28" stroke-width="0.7"/><path d="M15 12v-2h5v2" fill="none" stroke="#7a4a28"/></svg>
<svg class="a" style="left:89px;top:251px" width="24" height="22" viewBox="0 0 24 22"><path d="M1 5Q1 2 4 2H9L11 4H21V17H1Z" fill="#f3c860" stroke="#c89a40" stroke-width="0.8"/><rect x="1" y="7" width="20" height="10" rx="1" fill="#fde9a8" stroke="#d8aa50" stroke-width="0.6"/><path d="M17 11v10M12 16h10" stroke="#3a9a2a" stroke-width="2.6"/></svg>
<svg class="a" style="left:61px;top:279px" width="24" height="24" viewBox="0 0 24 24"><path d="M3.5 1.5H13L17 5.5V21.5H3.5Z" fill="#eee" stroke="#aaa" stroke-width="0.9"/><path d="M16 13v10M11 18h10" stroke="#3a9a2a" stroke-width="2.6"/></svg>
<svg class="a" style="left:89px;top:279px" width="24" height="24" viewBox="0 0 24 24"><path d="M3.5 1.5H13L17 5.5V21.5H3.5Z" fill="#eee" stroke="#aaa" stroke-width="0.9"/><circle cx="16" cy="17" r="6" fill="#3aa03a"/><path d="M19 17h-6M15.5 14l-3 3 3 3" fill="none" stroke="#fff" stroke-width="1.8"/></svg>
<svg class="a" style="left:117px;top:279px" width="24" height="24" viewBox="0 0 24 24"><path d="M3.5 1.5H13L17 5.5V21.5H3.5Z" fill="#eee" stroke="#aaa" stroke-width="0.9"/><circle cx="16" cy="17" r="6" fill="#3aa03a"/><path d="M13 17h6M16.5 14l3 3-3 3" fill="none" stroke="#fff" stroke-width="1.8"/></svg>
<svg class="a" style="left:61px;top:308px" width="24" height="24" viewBox="0 0 24 24"><rect x="9" y="1" width="6" height="6" fill="#e02020"/><path d="M12 7v3M5 10h14M5 10v3M19 10v3M5 16v3M2 19h8" fill="none" stroke="#444" stroke-width="0.8"/><rect x="2" y="13" width="5" height="5" fill="#2a8ae0"/><rect x="1" y="19" width="5" height="5" fill="#3aa03a"/><rect x="6.5" y="19" width="5" height="5" fill="#3aa03a"/><rect x="12" y="14" width="11" height="9" rx="1" fill="#b87858" stroke="#7a4a28" stroke-width="0.7"/><path d="M15 14v-2h5v2" fill="none" stroke="#7a4a28"/></svg>
<svg class="a" style="left:89px;top:308px" width="24" height="24" viewBox="0 0 24 24"><rect x="1" y="1" width="6" height="6" fill="#2a8ae0"/><rect x="1" y="10" width="6" height="6" fill="#2a8ae0"/><rect x="15" y="1" width="6" height="6" fill="#2a8ae0"/><path d="M7 4h8M4 7v3M11 4v9" stroke="#444" stroke-width="0.8" fill="none"/><circle cx="14" cy="17" r="6.5" fill="#3aa03a" stroke="#1f7a1f" stroke-width="0.7"/><path d="M14 12.5V20.5M10.5 17l3.5 3.5 3.5-3.5" fill="none" stroke="#fff" stroke-width="1.8"/><path d="M21 20l3 3-3 3z" fill="#000"/></svg>
<svg class="a" style="left:117px;top:308px" width="24" height="24" viewBox="0 0 24 24"><path d="M7 0v24" stroke="#444" stroke-width="0.9"/><rect x="1" y="4" width="13" height="13" fill="#2a8ae0"/><circle cx="17" cy="17" r="6.5" fill="#3aa03a" stroke="#1f7a1f" stroke-width="0.7"/><path d="M17 12.5V20.5M13.5 17l3.5 3.5 3.5-3.5" fill="none" stroke="#fff" stroke-width="1.8"/></svg>
<svg class="a" style="left:145px;top:308px" width="24" height="24" viewBox="0 0 24 24"><path d="M7 0v24" stroke="#444" stroke-width="0.9"/><rect x="1" y="5" width="13" height="12" fill="#2a8ae0"/><text x="14" y="9" font-size="10" font-weight="bold" fill="#b02020" font-family="Liberation Sans">#</text><circle cx="17" cy="17" r="6.5" fill="#3aa03a" stroke="#1f7a1f" stroke-width="0.7"/><path d="M17 12.5V20.5M13.5 17l3.5 3.5 3.5-3.5" fill="none" stroke="#fff" stroke-width="1.8"/></svg>
<svg class="a" style="left:173px;top:308px" width="24" height="24" viewBox="0 0 24 24"><path d="M7 0v24" stroke="#444" stroke-width="0.9"/><rect x="1" y="5" width="12" height="12" fill="#2a8ae0"/><text x="12" y="9" font-size="8" font-weight="bold" fill="#b02020" font-family="Liberation Serif">ID</text><circle cx="17" cy="17" r="6.5" fill="#3aa03a" stroke="#1f7a1f" stroke-width="0.7"/><path d="M17 12.5V20.5M13.5 17l3.5 3.5 3.5-3.5" fill="none" stroke="#fff" stroke-width="1.8"/></svg>
<svg class="a" style="left:201px;top:308px" width="24" height="24" viewBox="0 0 24 24"><path d="M0 6h24M6 0v24" stroke="#556" stroke-width="0.9"/><g fill="#fff" stroke="#d02020" stroke-width="1.1"><path d="M6 3l3 3-3 3-3-3z"/><path d="M18 3l3 3-3 3-3-3z"/><path d="M6 15l3 3-3 3-3-3z"/></g><circle cx="17" cy="17" r="6.5" fill="#3aa03a" stroke="#1f7a1f" stroke-width="0.7"/><path d="M17 12.5V20.5M13.5 17l3.5 3.5 3.5-3.5" fill="none" stroke="#fff" stroke-width="1.8"/><path d="M21 20l3 3-3 3z" fill="#000"/></svg>
<svg class="a" style="left:61px;top:336px" width="24" height="24" viewBox="0 0 24 24"><path d="M1 3h5M1 6h5M13 1v6M10 4h6" stroke="#b02020" stroke-width="1.1"/><rect x="1.5" y="9.5" width="21" height="13" fill="none" stroke="#b02020" stroke-dasharray="2 1.5"/><circle cx="17" cy="17" r="6.5" fill="#3aa03a" stroke="#1f7a1f" stroke-width="0.7"/><path d="M17 12.5V20.5M13.5 17l3.5 3.5 3.5-3.5" fill="none" stroke="#fff" stroke-width="1.8"/></svg>
<svg class="a" style="left:89px;top:336px" width="24" height="24" viewBox="0 0 24 24"><circle cx="7" cy="6" r="6" fill="#2a90e8"/><text x="3.5" y="9.5" font-size="9" font-weight="bold" fill="#fff" font-family="Liberation Sans">#</text><path d="M14 6h8M19 3l3 3-3 3" stroke="#000" stroke-width="1.5" fill="none"/><circle cx="17" cy="17" r="6.5" fill="#3aa03a" stroke="#1f7a1f" stroke-width="0.7"/><path d="M17 12.5V20.5M13.5 17l3.5 3.5 3.5-3.5" fill="none" stroke="#fff" stroke-width="1.8"/></svg>
<svg class="a" style="left:117px;top:336px" width="24" height="24" viewBox="0 0 24 24"><text x="-1" y="20" font-size="20" fill="#a02020" font-family="Liberation Serif">A</text><path d="M17 3h6M20 3v18M17 21h6" stroke="#a02020" stroke-width="1.4" fill="none"/></svg>
<svg class="a" style="left:145px;top:336px" width="24" height="24" viewBox="0 0 24 24"><rect x="1" y="2" width="5" height="5" fill="#2a8ae0"/><rect x="7" y="15" width="5" height="5" fill="#2a8ae0"/><path d="M3.5 0v9M9.5 13v9M6 4.5h13M12 17.5h7M23 0v24" stroke="#333" stroke-width="0.9"/></svg>
<svg class="a" style="left:173px;top:336px" width="24" height="24" viewBox="0 0 24 24"><rect x="1" y="2" width="5" height="5" fill="#2a8ae0"/><rect x="1" y="15" width="5" height="5" fill="#2a8ae0"/><path d="M3.5 0v22" stroke="#333" stroke-width="0.9"/><path d="M8 23l3-6 11-11 2 2-11 11z" fill="#f0a030" stroke="#805020" stroke-width="0.7"/></svg>
<svg class="a" style="left:201px;top:336px" width="24" height="24" viewBox="0 0 24 24"><path d="M8 1v16M0 9h16M5 4l3-3 3 3M5 14l3 3 3-3M3 6l-3 3 3 3M13 6l3 3-3 3" fill="none" stroke="#000" stroke-width="1.5"/><ellipse cx="19" cy="15" rx="4" ry="4.5" fill="#fde890" stroke="#c8a020" stroke-width="0.8"/><rect x="17.5" y="19" width="3" height="4" fill="#999"/></svg>
<svg class="a" style="left:61px;top:365px" width="24" height="26" viewBox="0 0 24 26"><path d="M1 14h5" stroke="#000" stroke-width="1"/><rect x="6" y="11" width="14" height="5" fill="#f01818"/><rect x="6" y="14" width="14" height="2" fill="#555" opacity="0.6"/></svg>
<svg class="a" style="left:89px;top:365px" width="24" height="26" viewBox="0 0 24 26"><path d="M1 3h4M1 12h4M1 21h4" stroke="#000"/><rect x="5" y="0" width="15" height="5" fill="#601818"/><rect x="5" y="9" width="15" height="5" fill="#f8e020" stroke="#444" stroke-width="0.5"/><rect x="5" y="18" width="15" height="5" fill="#f87010"/></svg>
<svg class="a" style="left:117px;top:365px" width="24" height="26" viewBox="0 0 24 26"><path d="M1 11h5" stroke="#000" stroke-width="1"/><rect x="6" y="8" width="14" height="5" fill="#f01818"/><rect x="6" y="11" width="14" height="2" fill="#555" opacity="0.6"/><rect x="0" y="17" width="22" height="3" fill="#000"/></svg>
<svg class="a" style="left:145px;top:365px" width="24" height="26" viewBox="0 0 24 26"><path d="M1 11h5" stroke="#000" stroke-width="1"/><rect x="6" y="8" width="14" height="5" fill="#f01818"/><rect x="6" y="11" width="14" height="2" fill="#555" opacity="0.6"/><path d="M0 18.5h22" stroke="#000" stroke-width="3" stroke-dasharray="6 3"/></svg>
<svg class="a" style="left:173px;top:365px" width="24" height="26" viewBox="0 0 24 26"><path d="M1 11h5" stroke="#000" stroke-width="1"/><rect x="6" y="8" width="14" height="5" fill="#f01818"/><rect x="6" y="11" width="14" height="2" fill="#555" opacity="0.6"/><path d="M0 18.5h22" stroke="#000" stroke-width="3" stroke-dasharray="5 2 2 2"/></svg>
<svg class="a" style="left:201px;top:365px" width="24" height="26" viewBox="0 0 24 26"><path d="M1 2h4" stroke="#000"/><rect x="5" y="0" width="17" height="5" fill="#f01818"/><path d="M0 9h22" stroke="#000" stroke-width="2"/><path d="M0 14h22" stroke="#000" stroke-width="2" stroke-dasharray="4 2"/><path d="M0 19h22" stroke="#000" stroke-width="2" stroke-dasharray="2 2"/></svg>
<svg class="a" style="left:61px;top:393px" width="24" height="26" viewBox="0 0 24 26"><path d="M1 3h4" stroke="#000"/><rect x="5" y="0" width="17" height="5" fill="#f01818"/><path d="M0 11h11v7h11" fill="none" stroke="#000" stroke-width="3"/></svg>
<svg class="a" style="left:89px;top:393px" width="24" height="26" viewBox="0 0 24 26"><path d="M1 2h4" stroke="#000"/><rect x="5" y="0" width="17" height="5" fill="#f01818"/><path d="M1 8h8v14h14" fill="none" stroke="#000" stroke-width="1.4"/><path d="M1 12l2 2M3 12l-2 2M19 12l2 2M21 12l-2 2M1 18l2 2M3 18l-2 2M19 18l2 2M21 18l-2 2" stroke="#333" stroke-width="0.8"/></svg>
<svg class="a" style="left:117px;top:393px" width="24" height="26" viewBox="0 0 24 26"><path d="M1 2h4" stroke="#000"/><rect x="5" y="0" width="17" height="5" fill="#f01818"/><path d="M5 10h6M8 5l4 6" stroke="#c04040" stroke-width="0.8"/><path d="M12 11v11l3-3 3 5 2-1-3-5h4z" fill="#2a70e0"/></svg>
<svg class="a" style="left:145px;top:393px" width="24" height="26" viewBox="0 0 24 26"><rect x="0" y="2" width="24" height="22" fill="#eaeaea"/><g fill="#f4e888" stroke="#999" stroke-width="0.7"><path d="M1 16l12-5 9 3-12 5z"/><path d="M1 11l12-5 9 3-12 5z"/><path d="M1 6l12-5 9 3-12 5z"/></g><path d="M13 12v11l3-3 3 5 2-1-3-5h4z" fill="#2a70e0"/></svg>
<svg class="a" style="left:173px;top:393px" width="24" height="26" viewBox="0 0 24 26"><circle cx="11" cy="12" r="9.5" fill="#000"/></svg>
<svg class="a" style="left:201px;top:393px" width="24" height="26" viewBox="0 0 24 26"><path d="M3 1v23M21 1v23M0 2h6M18 2h6M0 23h6M18 23h6M3 7h18M3 12h18M3 17h18" stroke="#000" stroke-width="2" fill="none"/></svg>
<svg class="a" style="left:61px;top:421px" width="24" height="26" viewBox="0 0 24 26"><path d="M1 2h4" stroke="#000"/><rect x="5" y="0" width="16" height="5" fill="#f01818"/><path d="M2 10h10M4 8v4M8 8v4" stroke="#556" stroke-width="1.2"/><ellipse cx="6" cy="12" rx="4" ry="2" fill="none" stroke="#556"/><circle cx="17" cy="19" r="6" fill="#3aa03a" stroke="#1f7a1f" stroke-width="0.7"/><path d="M17 15V22M13.5 19l3.5 3.5 3.5-3.5" fill="none" stroke="#fff" stroke-width="1.8"/></svg>
<svg class="a" style="left:89px;top:421px" width="24" height="26" viewBox="0 0 24 26"><path d="M0 5h22" stroke="#000" stroke-width="2"/><path d="M4 13L18 0" stroke="#000" stroke-width="2"/><circle cx="17" cy="19" r="6" fill="#3aa03a" stroke="#1f7a1f" stroke-width="0.7"/><path d="M17 15V22M13.5 19l3.5 3.5 3.5-3.5" fill="none" stroke="#fff" stroke-width="1.8"/></svg>
<svg class="a" style="left:117px;top:421px" width="24" height="26" viewBox="0 0 24 26"><path d="M8 0v5M4 3h8M4 20h8M8 20v5" stroke="#000" stroke-width="1.3"/><rect x="1" y="8" width="16" height="9" rx="1" fill="#a02020"/><rect x="15" y="10" width="8" height="5" fill="#e8c070"/><path d="M21 21l3 3-3 3z" fill="#000"/></svg>
<svg class="a" style="left:61px;top:452px" width="24" height="24" viewBox="0 0 24 24"><text x="0" y="17" font-size="13" font-weight="bold" fill="#a02020" font-family="Liberation Serif" textLength="23" lengthAdjust="spacingAndGlyphs">12...</text></svg>
<svg class="a" style="left:89px;top:452px" width="24" height="24" viewBox="0 0 24 24"><text x="2" y="17" font-size="13" font-weight="bold" fill="#a02020" font-family="Liberation Serif" letter-spacing="2">##</text></svg>
<svg class="a" style="left:117px;top:452px" width="24" height="24" viewBox="0 0 24 24"><path d="M1 0v23" stroke="#a02020" stroke-width="1.6"/><text x="10" y="9" font-size="8" fill="#a02020" font-family="Liberation Serif">123</text><text x="3" y="17" font-size="8" fill="#a02020" font-family="Liberation Serif">123</text><path d="M3 20h19" stroke="#a02020" stroke-width="1.3"/></svg>
<svg class="a" style="left:145px;top:452px" width="24" height="24" viewBox="0 0 24 24"><text x="0" y="17" font-size="13" font-weight="bold" fill="#a02020" font-family="Liberation Serif">123</text><path d="M11 14l8 8M19 14l-8 8" stroke="#e02020" stroke-width="2.6"/></svg>
<svg class="a" style="left:173px;top:452px" width="24" height="24" viewBox="0 0 24 24"><rect x="1" y="1" width="22" height="15" rx="2" fill="#d8ecfc" stroke="#3a90e0" stroke-width="1.2"/><path d="M5 7h13M5 11h10" stroke="#aac" stroke-width="1"/><path d="M17 13v10M12 18h10" stroke="#3a9a2a" stroke-width="2.6"/></svg>
<svg class="a" style="left:201px;top:452px" width="24" height="24" viewBox="0 0 24 24"><rect x="1" y="1" width="22" height="15" rx="2" fill="#d8ecfc" stroke="#3a90e0" stroke-width="1.2"/><path d="M5 7h13M5 11h10" stroke="#aac" stroke-width="1"/><path d="M9 23l2-5 10-10 3 3-10 10z" fill="#f0a030" stroke="#805020" stroke-width="0.7"/></svg>
<svg class="a" style="left:61px;top:482px" width="24" height="24" viewBox="0 0 24 24"><rect x="1.5" y="1.5" width="12" height="19" fill="#d0e8fc" stroke="#2a50e0" stroke-dasharray="1.5 1"/><circle cx="16" cy="17" r="6" fill="#3aa03a" stroke="#1f7a1f" stroke-width="0.7"/><path d="M16 13V20M12.5 17l3.5 3.5 3.5-3.5" fill="none" stroke="#fff" stroke-width="1.8"/><path d="M21 20l3 3-3 3z" fill="#000"/></svg>
<svg class="a" style="left:89px;top:482px" width="24" height="24" viewBox="0 0 24 24"><path d="M1 11l8-8v14l-8 5z" fill="#2a50c0"/><path d="M9 3l12-2v16l-12 0z" fill="#6a8ae0" stroke="#2040a0" stroke-width="0.6"/><path d="M14 8l8-7v15l-8 5z" fill="#3060d0"/><path d="M20 20l3 3-3 3z" fill="#000"/></svg>
<svg class="a" style="left:117px;top:482px" width="24" height="24" viewBox="0 0 24 24"><rect x="0.5" y="1.5" width="22" height="16" fill="#e0eefa" stroke="#222"/><path d="M2 5h19M2 14h19" stroke="#333" stroke-dasharray="1.5 1"/><rect x="4" y="7.5" width="6" height="4" rx="1.5" fill="none" stroke="#222"/><rect x="13" y="7.5" width="6" height="4" rx="1.5" fill="none" stroke="#222"/><path d="M20 19l3 3-3 3z" fill="#000"/></svg>
<svg class="a" style="left:61px;top:511px" width="24" height="26" viewBox="0 0 24 26"><path d="M1 1.5h22M1 23.5h20" stroke="#333" stroke-width="2.4" stroke-dasharray="1.5 0.8"/><text x="-1" y="19" font-size="16" font-weight="bold" fill="#1a3a88" font-family="Liberation Sans">.05</text><path d="M21 21l3 3-3 3z" fill="#000"/></svg>
<svg class="a" style="left:89px;top:511px" width="24" height="26" viewBox="0 0 24 26"><rect x="1" y="6" width="2.5" height="2.5" fill="#000"/><rect x="1" y="10" width="2.5" height="2.5" fill="#000"/><rect x="1" y="14" width="2.5" height="2.5" fill="#000"/><rect x="1" y="18" width="2.5" height="2.5" fill="#000"/><rect x="5" y="6" width="2.5" height="2.5" fill="#000"/><rect x="5" y="10" width="2.5" height="2.5" fill="#000"/><rect x="5" y="14" width="2.5" height="2.5" fill="#000"/><rect x="5" y="18" width="2.5" height="2.5" fill="#000"/><rect x="9" y="6" width="2.5" height="2.5" fill="#000"/><rect x="9" y="10" width="2.5" height="2.5" fill="#000"/><rect x="9" y="14" width="2.5" height="2.5" fill="#000"/><rect x="9" y="18" width="2.5" height="2.5" fill="#000"/><rect x="13" y="6" width="2.5" height="2.5" fill="#000"/><rect x="13" y="10" width="2.5" height="2.5" fill="#000"/><rect x="13" y="14" width="2.5" height="2.5" fill="#000"/><rect x="13" y="18" width="2.5" height="2.5" fill="#000"/><path d="M13 5q5-6 10 0q-5 4-10 0z" fill="#fff" stroke="#8a9ab0" stroke-width="0.9"/><path d="M14 2.5q4-4 8 0" fill="none" stroke="#999" stroke-width="1"/><circle cx="18" cy="4.6" r="2.2" fill="#3a90f0"/></svg>
<svg class="a" style="left:117px;top:511px" width="24" height="26" viewBox="0 0 24 26"><path d="M2 8l6 6-6 6M20 8l-6 6 6 6M4 6l6 6M16 6l-6 6" stroke="#f0c040" stroke-width="3.2" fill="none"/><rect x="7" y="10" width="8" height="8" fill="#f4d880"/><path d="M13 5q5-6 10 0q-5 4-10 0z" fill="#fff" stroke="#8a9ab0" stroke-width="0.9"/><path d="M14 2.5q4-4 8 0" fill="none" stroke="#999" stroke-width="1"/><circle cx="18" cy="4.6" r="2.2" fill="#3a90f0"/></svg>
<svg class="a" style="left:145px;top:511px" width="24" height="26" viewBox="0 0 24 26"><path d="M2 8l6 6-6 6M20 8l-6 6 6 6M4 6l6 6M16 6l-6 6" stroke="#f0c040" stroke-width="3.2" fill="none"/><rect x="7" y="10" width="8" height="8" fill="#f4d880"/><text x="13" y="22" font-size="11" font-weight="bold" fill="#c01818" font-family="Liberation Sans">T</text><path d="M13 5q5-6 10 0q-5 4-10 0z" fill="#fff" stroke="#8a9ab0" stroke-width="0.9"/><path d="M14 2.5q4-4 8 0" fill="none" stroke="#999" stroke-width="1"/><circle cx="18" cy="4.6" r="2.2" fill="#3a90f0"/></svg>
<svg class="a" style="left:173px;top:511px" width="24" height="26" viewBox="0 0 24 26"><circle cx="10" cy="14" r="5" fill="none" stroke="#222" stroke-width="3"/><path d="M10 6v16M2 14h16M4.5 8.5l11 11M15.5 8.5l-11 11" stroke="#222" stroke-width="2"/><circle cx="10" cy="14" r="2.5" fill="#fff"/><path d="M2 1v5" stroke="#c01818" stroke-width="1.4"/><text x="15" y="24" font-size="9" fill="#c01818" font-family="Liberation Sans">E</text><path d="M13 5q5-6 10 0q-5 4-10 0z" fill="#fff" stroke="#8a9ab0" stroke-width="0.9"/><path d="M14 2.5q4-4 8 0" fill="none" stroke="#999" stroke-width="1"/><circle cx="18" cy="4.6" r="2.2" fill="#3a90f0"/></svg>
<svg class="a" style="left:201px;top:511px" width="24" height="26" viewBox="0 0 24 26"><path d="M7 2v14" stroke="#e01818" stroke-width="3"/><path d="M2 13l5 7 5-7z" fill="#e01818"/><path d="M13 5q5-6 10 0q-5 4-10 0z" fill="#fff" stroke="#8a9ab0" stroke-width="0.9"/><path d="M14 2.5q4-4 8 0" fill="none" stroke="#999" stroke-width="1"/><circle cx="18" cy="4.6" r="2.2" fill="#3a90f0"/></svg>
<svg class="a" style="left:61px;top:539px" width="24" height="26" viewBox="0 0 24 26"><text x="1" y="22" font-size="17" font-weight="bold" fill="#c01818" font-family="Liberation Sans">#</text><path d="M13 7q5-6 10 0q-5 4-10 0z" fill="#fff" stroke="#8a9ab0" stroke-width="0.9"/><path d="M14 4.5q4-4 8 0" fill="none" stroke="#999" stroke-width="1"/><circle cx="18" cy="6.6" r="2.2" fill="#3a90f0"/></svg>
<svg class="a" style="left:89px;top:539px" width="24" height="26" viewBox="0 0 24 26"><text x="1" y="22" font-size="17" font-weight="bold" fill="#c01818" font-family="Liberation Sans">#</text><path d="M3 17h20" stroke="#222" stroke-width="1.6"/><path d="M13 7q5-6 10 0q-5 4-10 0z" fill="#fff" stroke="#8a9ab0" stroke-width="0.9"/><path d="M14 4.5q4-4 8 0" fill="none" stroke="#999" stroke-width="1"/><circle cx="18" cy="6.6" r="2.2" fill="#3a90f0"/></svg>
<svg class="a" style="left:117px;top:539px" width="24" height="26" viewBox="0 0 24 26"><path d="M0 16h22" stroke="#222" stroke-width="2"/><path d="M5 22l12-12" stroke="#222" stroke-width="2.2"/><path d="M13 7q5-6 10 0q-5 4-10 0z" fill="#fff" stroke="#8a9ab0" stroke-width="0.9"/><path d="M14 4.5q4-4 8 0" fill="none" stroke="#999" stroke-width="1"/><circle cx="18" cy="6.6" r="2.2" fill="#3a90f0"/></svg>
<svg class="a" style="left:145px;top:539px" width="24" height="26" viewBox="0 0 24 26"><path d="M8 3v16h9" stroke="#222" stroke-width="1" fill="none"/><circle cx="8" cy="3" r="2.3" fill="#1a3ad0"/><circle cx="8" cy="19" r="4" fill="#e01818"/><circle cx="17" cy="19" r="2.6" fill="#18a018"/><path d="M13 7q5-6 10 0q-5 4-10 0z" fill="#fff" stroke="#8a9ab0" stroke-width="0.9"/><path d="M14 4.5q4-4 8 0" fill="none" stroke="#999" stroke-width="1"/><circle cx="18" cy="6.6" r="2.2" fill="#3a90f0"/></svg>
<div class="sec" style="top:575px"><svg class="a" style="left:4px;top:3px" width="17" height="17" viewBox="0 0 17 17"><path d="M1 4Q1 1 4 1H8L10 3H16V14H1Z" fill="#f8d878" stroke="#d0a040" stroke-width="0.8"/><rect x="1" y="5" width="15" height="9" fill="#fbe9a0"/><rect x="7" y="9" width="10" height="8" rx="1" fill="#b87858" stroke="#805030" stroke-width="0.7"/></svg><span>3D 布置设计</span><svg class="a" style="left:180px;top:7px" width="12" height="9" viewBox="0 0 12 9"><path d="M1.2 1.8L6 6.6L10.8 1.8" fill="none" stroke="#2a2a2a" stroke-width="3"/></svg></div>
<div class="sec" style="top:603px"><svg class="a" style="left:4px;top:3px" width="17" height="17" viewBox="0 0 17 17"><path d="M3 14l5-12 5 12M1 8h14M6 10h5" fill="none" stroke="#a89060" stroke-width="1.3"/></svg><span>检查/修订</span><svg class="a" style="left:178px;top:6px" width="14" height="12" viewBox="0 0 14 12"><path d="M0 11.5L13 3V11.5Z" fill="#1a8a1a"/><path d="M0 11.5L6 7.5V11.5Z" fill="#c02020"/><path d="M5 8.5L8 6.5V11.5H5Z" fill="#c8a030"/><circle cx="11" cy="2" r="1.6" fill="#111"/><path d="M1 10l9-7" stroke="#fff" stroke-width="0.8" stroke-dasharray="1 1"/></svg></div>
<div class="sec" style="top:631px"><svg class="a" style="left:4px;top:3px" width="17" height="17" viewBox="0 0 17 17"><rect x="0.5" y="0.5" width="15" height="15" fill="#fff" stroke="#333" stroke-width="1.2"/><path d="M4 1v14M6 4h6M6 7h6M6 10h6" stroke="#333" stroke-width="1"/><path d="M12 1v14" stroke="#d01818" stroke-dasharray="1 1"/><rect x="0" y="0" width="16" height="2" fill="#3a50a0"/></svg><span>输出</span><svg class="a" style="left:178px;top:6px" width="14" height="12" viewBox="0 0 14 12"><path d="M0 11.5L13 3V11.5Z" fill="#1a8a1a"/><path d="M0 11.5L6 7.5V11.5Z" fill="#c02020"/><path d="M5 8.5L8 6.5V11.5H5Z" fill="#c8a030"/><circle cx="11" cy="2" r="1.6" fill="#111"/><path d="M1 10l9-7" stroke="#fff" stroke-width="0.8" stroke-dasharray="1 1"/></svg></div>
<div class="sec" style="top:659px"><svg class="a" style="left:4px;top:3px" width="17" height="17" viewBox="0 0 17 17"><circle cx="6" cy="6" r="5" fill="#e0b040"/><circle cx="12" cy="5" r="4" fill="#30a030"/><circle cx="8" cy="11" r="5.5" fill="#2a70e0"/><circle cx="8" cy="11" r="2" fill="#113"/></svg><span>管理</span><svg class="a" style="left:178px;top:6px" width="14" height="12" viewBox="0 0 14 12"><path d="M0 11.5L13 3V11.5Z" fill="#1a8a1a"/><path d="M0 11.5L6 7.5V11.5Z" fill="#c02020"/><path d="M5 8.5L8 6.5V11.5H5Z" fill="#c8a030"/><circle cx="11" cy="2" r="1.6" fill="#111"/><path d="M1 10l9-7" stroke="#fff" stroke-width="0.8" stroke-dasharray="1 1"/></svg></div>
<div class="sec" style="top:687px"><svg class="a" style="left:4px;top:3px" width="17" height="17" viewBox="0 0 17 17"><path d="M2 3l6 10M8 13l5-11" stroke="#333" stroke-width="1"/><circle cx="2" cy="3" r="1.8" fill="#2a70e0"/><circle cx="8" cy="14" r="1.8" fill="#2a70e0"/><ellipse cx="13" cy="3.5" rx="2.5" ry="3.5" fill="#f8e040" stroke="#a08000" stroke-width="0.6"/></svg><span>绘图</span><svg class="a" style="left:180px;top:7px" width="12" height="9" viewBox="0 0 12 9"><path d="M1.2 1.8L6 6.6L10.8 1.8" fill="none" stroke="#2a2a2a" stroke-width="3"/></svg></div>
<div class="sec" style="top:715px"><svg class="a" style="left:4px;top:3px" width="17" height="17" viewBox="0 0 17 17"><rect x="1" y="1" width="11" height="9" fill="#f8d070" stroke="#d09030"/><rect x="4" y="4" width="11" height="9" fill="#fbe090" stroke="#d09030"/><circle cx="10" cy="10" r="3.5" fill="#cfe8ff" stroke="#2a70e0" stroke-width="1.2"/><path d="M12.5 12.5l3 3" stroke="#e04020" stroke-width="1.8"/></svg><span>组图</span><svg class="a" style="left:178px;top:6px" width="14" height="12" viewBox="0 0 14 12"><path d="M0 11.5L13 3V11.5Z" fill="#1a8a1a"/><path d="M0 11.5L6 7.5V11.5Z" fill="#c02020"/><path d="M5 8.5L8 6.5V11.5H5Z" fill="#c8a030"/><circle cx="11" cy="2" r="1.6" fill="#111"/><path d="M1 10l9-7" stroke="#fff" stroke-width="0.8" stroke-dasharray="1 1"/></svg></div>
<div class="sec" style="top:743px"><svg class="a" style="left:4px;top:3px" width="17" height="17" viewBox="0 0 17 17"><path d="M3 8l9-4 4 3-9 5z" fill="#fff" stroke="#2a50c0" stroke-width="1.2"/><path d="M3 8v6l9-4V7" fill="#cde" stroke="#2a50c0" stroke-width="1.2"/><path d="M1 6l5-5M4 1h2v2" stroke="#111" stroke-width="1.1" fill="none"/></svg><span>实体建模</span><svg class="a" style="left:180px;top:7px" width="12" height="9" viewBox="0 0 12 9"><path d="M1.2 1.8L6 6.6L10.8 1.8" fill="none" stroke="#2a2a2a" stroke-width="3"/></svg></div>
<div class="sec" style="top:771px"><svg class="a" style="left:4px;top:3px" width="17" height="17" viewBox="0 0 17 17"><path d="M1 9l7-7 8 8-7 5z" fill="#80b8f0" stroke="#666" stroke-width="0.8"/><path d="M4 6l8 7M6 4l8 7M3 11l7-6M6 13l7-6" stroke="#fff" stroke-width="0.6"/></svg><span>表面模型</span><svg class="a" style="left:180px;top:7px" width="12" height="9" viewBox="0 0 12 9"><path d="M1.2 1.8L6 6.6L10.8 1.8" fill="none" stroke="#2a2a2a" stroke-width="3"/></svg></div>
<div class="sec" style="top:799px"><svg class="a" style="left:4px;top:3px" width="17" height="17" viewBox="0 0 17 17"><circle cx="8" cy="8" r="7.5" fill="#2a80f0"/><path d="M0.5 8h15M8 0.5v15M3 3q5 6 10 0M3 13q5-6 10 0" fill="none" stroke="#fff" stroke-width="0.9"/></svg><span>网格建模</span><svg class="a" style="left:180px;top:7px" width="12" height="9" viewBox="0 0 12 9"><path d="M1.2 1.8L6 6.6L10.8 1.8" fill="none" stroke="#2a2a2a" stroke-width="3"/></svg></div>
<div class="sec" style="top:827px"><svg class="a" style="left:4px;top:3px" width="17" height="17" viewBox="0 0 17 17"><path d="M2 2l6 3v8l-6-2z" fill="#5aa8f0" stroke="#2a60c0" stroke-width="0.8"/><path d="M8 5l7 2-2 7-5-1" fill="#bde" stroke="#2a60c0" stroke-width="0.8"/></svg><span>特征模型</span><svg class="a" style="left:180px;top:7px" width="12" height="9" viewBox="0 0 12 9"><path d="M1.2 1.8L6 6.6L10.8 1.8" fill="none" stroke="#2a2a2a" stroke-width="3"/></svg></div>
<div class="sec" style="top:855px"><svg class="a" style="left:4px;top:3px" width="17" height="17" viewBox="0 0 17 17"><rect x="1" y="2" width="6" height="12" fill="#aaa" stroke="#666" stroke-width="0.6"/><rect x="8" y="2" width="7" height="12" fill="#ccc" stroke="#666" stroke-width="0.6"/><circle cx="11.5" cy="8" r="2.2" fill="#6a8ae0"/></svg><span>可视化</span><svg class="a" style="left:180px;top:7px" width="12" height="9" viewBox="0 0 12 9"><path d="M1.2 1.8L6 6.6L10.8 1.8" fill="none" stroke="#2a2a2a" stroke-width="3"/></svg></div>
<div class="sec" style="top:883px"><svg class="a" style="left:4px;top:3px" width="17" height="17" viewBox="0 0 17 17"><rect x="2" y="1" width="12" height="14" fill="none" stroke="#901818" stroke-width="2.2"/><path d="M2 5.5h12M2 10.5h12" stroke="#901818" stroke-width="2"/></svg><span>动画</span><svg class="a" style="left:180px;top:7px" width="12" height="9" viewBox="0 0 12 9"><path d="M1.2 1.8L6 6.6L10.8 1.8" fill="none" stroke="#2a2a2a" stroke-width="3"/></svg></div>
<div class="sec" style="top:911px"><svg class="a" style="left:4px;top:3px" width="17" height="17" viewBox="0 0 17 17"><ellipse cx="8" cy="8" rx="5" ry="4" fill="none" stroke="#2a50c0" stroke-width="1.3"/><path d="M0 8h16" stroke="#2a50c0" stroke-width="1.3"/></svg><span>模型文档(3D)</span><svg class="a" style="left:178px;top:6px" width="14" height="12" viewBox="0 0 14 12"><path d="M0 11.5L13 3V11.5Z" fill="#1a8a1a"/><path d="M0 11.5L6 7.5V11.5Z" fill="#c02020"/><path d="M5 8.5L8 6.5V11.5H5Z" fill="#c8a030"/><circle cx="11" cy="2" r="1.6" fill="#111"/><path d="M1 10l9-7" stroke="#fff" stroke-width="0.8" stroke-dasharray="1 1"/></svg></div>
<div class="a" style="left:241px;top:92px;width:5px;height:870px;background:#aaaad8"></div>
<div class="a" style="left:246px;top:92px;width:1674px;height:38px;background:linear-gradient(#97b1d0,#a6bfdc 45%,#b9d1ea)"></div>
<div class="a" style="left:246px;top:92px;width:1674px;height:1px;background:#333"></div>
<svg class="a" style="left:248px;top:105px" width="20" height="19" viewBox="0 0 20 19"><rect x="1" y="1" width="17" height="17" rx="1" fill="#c8dcf0" stroke="#fff" stroke-width="1.2"/><ellipse cx="9" cy="6" rx="6" ry="2.5" fill="#a8d8ff"/><path d="M3 6v10l7 1V7z" fill="#0aa0f8"/><path d="M11 7v10l5-2V5z" fill="#0a3ae8"/></svg>
<div class="a" style="left:276px;top:106px;font-size:15px;white-space:nowrap">视图 1 - 顶视图, Default</div>
<div class="a" style="left:1789px;top:103px;width:41px;height:24px;border:1px solid #56657e;border-radius:3px;background:linear-gradient(#c8daee,#bcd0e8 42%,#9cb5d4 43%,#a6bedc 75%,#b8cde6)"></div><svg class="a" style="left:1789px;top:103px" width="41" height="24" viewBox="0 0 41 24"><rect x="12" y="10" width="17" height="5" rx="1" fill="#fff" stroke="#555" stroke-width="0.8"/></svg>
<div class="a" style="left:1834px;top:103px;width:41px;height:24px;border:1px solid #56657e;border-radius:3px;background:linear-gradient(#c8daee,#bcd0e8 42%,#9cb5d4 43%,#a6bedc 75%,#b8cde6)"></div><svg class="a" style="left:1834px;top:103px" width="41" height="24" viewBox="0 0 41 24"><rect x="16" y="4" width="12" height="10" fill="none" stroke="#555" stroke-width="3.6"/><rect x="16" y="4" width="12" height="10" fill="none" stroke="#fff" stroke-width="2"/><rect x="11" y="9" width="12" height="10" fill="#a9c0dc" stroke="#555" stroke-width="3.6"/><rect x="11" y="9" width="12" height="10" fill="none" stroke="#fff" stroke-width="2"/></svg>
<div class="a" style="left:1877px;top:103px;width:41px;height:24px;border:1px solid #5a1418;border-radius:3px;background:linear-gradient(#eab0a0,#dc8a78 42%,#c0401f 43%,#c44a2c 75%,#d87a60)"></div><svg class="a" style="left:1877px;top:103px" width="41" height="24" viewBox="0 0 41 24"><path d="M14 6l12 12M26 6L14 18" stroke="#555" stroke-width="5"/><path d="M14 6l12 12M26 6L14 18" stroke="#fff" stroke-width="3.2"/></svg>
<div class="a" style="left:246px;top:130px;width:1674px;height:24px;background:#f0f0f0"></div>
<svg class="a" style="left:250px;top:134px" width="20" height="17" viewBox="0 0 20 17"><rect x="0.5" y="0.5" width="14" height="11" fill="#fff" stroke="#666"/><rect x="7" y="7" width="11" height="9" fill="#fff8c8" stroke="#444" stroke-width="0.8"/><path d="M9 10h7M9 13h7" stroke="#3870d0" stroke-width="1.2"/></svg>
<div class="a" style="left:273px;top:139px;width:0;height:0;border-left:5px solid transparent;border-right:5px solid transparent;border-top:6px solid #000"></div>
<svg class="a" style="left:290px;top:133px" width="22" height="19" viewBox="0 0 22 19"><path d="M2 10q0-8 10-8 8 0 8 6 0 8-10 8-8 0-8-6z" fill="#a8d0f8" stroke="#2a60c0" stroke-width="1.2"/><path d="M7 9q3-4 7-2" stroke="#fff" stroke-width="1.5" fill="none"/><path d="M14 16l3 3 3-3z" fill="#000"/></svg>
<svg class="a" style="left:312px;top:132px" width="20" height="20" viewBox="0 0 20 20"><circle cx="10" cy="10" r="4.5" fill="#b8e0ff" stroke="#556"/><path d="M10 0v5M10 15v5M0 10h5M15 10h5M3 3l3 3M17 3l-3 3M3 17l3-3M17 17l-3-3" stroke="#666" stroke-width="1.2"/></svg>
<div class="a" style="left:336px;top:139px;width:0;height:0;border-left:5px solid transparent;border-right:5px solid transparent;border-top:6px solid #000"></div>
<div class="a" style="left:352px;top:133px;width:2px;height:21px;border-left:1px solid #a0a0a0;border-right:1px solid #fff"></div>
<svg class="a" style="left:358px;top:133px" width="19" height="19" viewBox="0 0 19 19"><rect x="7" y="0" width="3" height="8" fill="#a02020"/><path d="M3 9h11v6H3z" fill="#c8d8f8" stroke="#2a60c0" stroke-width="0.8"/><path d="M1 16h15" stroke="#2a60c0" stroke-width="1.5"/></svg>
<svg class="a" style="left:380px;top:133px" width="19" height="19" viewBox="0 0 19 19"><circle cx="7" cy="7" r="5" fill="#fff" stroke="#333" stroke-width="1.2"/><path d="M4.5 7h5M7 4.5v5" stroke="#333"/><path d="M10.5 10.5l5 5" stroke="#e08a20" stroke-width="2.2"/></svg>
<svg class="a" style="left:402px;top:133px" width="19" height="19" viewBox="0 0 19 19"><circle cx="7" cy="7" r="5" fill="#fff" stroke="#333" stroke-width="1.2"/><path d="M4.5 7h5" stroke="#333"/><path d="M10.5 10.5l5 5" stroke="#e08a20" stroke-width="2.2"/></svg>
<svg class="a" style="left:425px;top:133px" width="19" height="19" viewBox="0 0 19 19"><rect x="1.5" y="1.5" width="14" height="14" fill="none" stroke="#333" stroke-dasharray="2 1"/><circle cx="7" cy="7" r="4" fill="#fff" stroke="#333" stroke-width="1.1"/><path d="M10 10l4 4" stroke="#e08a20" stroke-width="2"/></svg>
<svg class="a" style="left:446px;top:133px" width="19" height="19" viewBox="0 0 19 19"><rect x="0.5" y="1.5" width="16" height="14" fill="#fff" stroke="#333"/><path d="M8.5 3v11M2 8.5h13M6 5l2.5-2 2.5 2M6 12l2.5 2 2.5-2M4 6l-2 2.5 2 2.5M13 6l2 2.5-2 2.5" fill="none" stroke="#111" stroke-width="1.1"/></svg>
<svg class="a" style="left:469px;top:133px" width="19" height="19" viewBox="0 0 19 19"><path d="M3 9q0-6 7-6M10 3l-2-2M10 3l-2 2" fill="none" stroke="#2a60e0" stroke-width="1.5"/><circle cx="8" cy="10" r="5" fill="#a8d0f8" stroke="#2a60c0"/><path d="M8 4v14" stroke="#222" stroke-width="1.3"/><path d="M13 15l3 3 3-3z" fill="#000"/></svg>
<svg class="a" style="left:491px;top:133px" width="19" height="19" viewBox="0 0 19 19"><path d="M4 16q-3-4-2-8l2 1V3h2v6V1h2v8V2h2v7V4h2v9l2-3 2 1-4 7H6z" fill="#fff" stroke="#2a50c0" stroke-width="1.1"/></svg>
<div class="a" style="left:513px;top:133px;width:2px;height:21px;border-left:1px solid #a0a0a0;border-right:1px solid #fff"></div>
<svg class="a" style="left:518px;top:133px" width="20" height="19" viewBox="0 0 20 19"><ellipse cx="5" cy="8" rx="3" ry="6" fill="#fff" stroke="#2a50c0" stroke-width="1.3"/><ellipse cx="14" cy="8" rx="3" ry="6" fill="#fff" stroke="#2a50c0" stroke-width="1.3"/><circle cx="5" cy="16" r="2" fill="#2a50c0"/><circle cx="14" cy="16" r="2" fill="#2a50c0"/></svg>
<svg class="a" style="left:540px;top:134px" width="19" height="16" viewBox="0 0 19 16"><rect x="0.5" y="0.5" width="17" height="14" fill="#fff" stroke="#333"/><path d="M4 10q2-6 9-3M5 7l-1 3 3 0" fill="none" stroke="#333" stroke-width="1"/></svg>
<svg class="a" style="left:563px;top:134px" width="19" height="16" viewBox="0 0 19 16"><rect x="0.5" y="0.5" width="17" height="14" fill="#fff" stroke="#333"/><path d="M5 7q7-3 9 3M13 7l1 3-3 0" fill="none" stroke="#333" stroke-width="1"/></svg>
<div class="a" style="left:585px;top:133px;width:2px;height:21px;border-left:1px solid #a0a0a0;border-right:1px solid #fff"></div>
<svg class="a" style="left:591px;top:133px" width="20" height="19" viewBox="0 0 20 19"><rect x="8.5" y="0.5" width="9" height="7" fill="#fff" stroke="#555"/><rect x="0.5" y="10.5" width="9" height="7" fill="#fff" stroke="#555"/><path d="M13 8v6h-3" fill="none" stroke="#222"/></svg>
<svg class="a" style="left:614px;top:133px" width="21" height="20" viewBox="0 0 21 20"><path d="M1 3h16L10 17z" fill="#fff" stroke="#333" stroke-width="1.2"/><path d="M1 3l9 5 7-5M10 8v9" stroke="#333" stroke-width="1"/><path d="M14 15l3 3 3-3z" fill="#000"/></svg>
<svg class="a" style="left:635px;top:133px" width="19" height="19" viewBox="0 0 19 19"><path d="M2 6l7-4 8 3v9l-7 4-8-3z" fill="#d8ecfc" stroke="#2a80e8" stroke-width="1.3"/><path d="M2 6l8 3 7-4M10 9v9" stroke="#2a80e8" stroke-width="1.1" fill="none"/></svg>
<svg class="a" style="left:657px;top:133px" width="21" height="20" viewBox="0 0 21 20"><path d="M2 5l6-3 6 2v7l-6 3-6-2z" fill="#d8ecfc" stroke="#2a80e8" stroke-width="1.1"/><path d="M4 10l10 8M14 10L4 18" stroke="#222" stroke-width="1.3"/><path d="M14 15l3 3 3-3z" fill="#000"/></svg>
<svg class="a" style="left:680px;top:133px" width="19" height="19" viewBox="0 0 19 19"><rect x="0.5" y="0.5" width="13" height="11" rx="2" fill="#fff" stroke="#2a80e8" stroke-width="1.3"/><path d="M8 9l4-2 4 2v6l-4 2-4-2z" fill="#888" stroke="#444" stroke-width="0.8"/></svg>
<div class="a" style="left:246px;top:154px;width:1674px;height:808px;background:#000"></div>
<svg class="a" style="left:0;top:0" width="1920" height="1030" font-family="Liberation Sans"><rect x="596.5" y="322.5" width="914" height="443" fill="none" stroke="#ffffff" stroke-width="1.3"/><line x1="621.5" y1="399.5" x2="1062" y2="399.5" stroke="#ffffff" stroke-width="1.3"/><line x1="621.5" y1="408.5" x2="1062" y2="408.5" stroke="#ffffff" stroke-width="1.3"/><line x1="621.5" y1="507.5" x2="1062" y2="507.5" stroke="#ffffff" stroke-width="1.3"/><line x1="621.5" y1="516.5" x2="1062" y2="516.5" stroke="#ffffff" stroke-width="1.3"/><line x1="621.5" y1="525.5" x2="1062" y2="525.5" stroke="#ffffff" stroke-width="1.3"/><line x1="621.5" y1="534.5" x2="1062" y2="534.5" stroke="#ffffff" stroke-width="1.3"/><line x1="621.5" y1="543.5" x2="1062" y2="543.5" stroke="#ffffff" stroke-width="1.3"/><line x1="621.5" y1="552.5" x2="1062" y2="552.5" stroke="#ffffff" stroke-width="1.3"/><line x1="621.5" y1="561.5" x2="1062" y2="561.5" stroke="#ffffff" stroke-width="1.3"/><line x1="621.5" y1="570.5" x2="1062" y2="570.5" stroke="#ffffff" stroke-width="1.3"/><line x1="621.5" y1="579.5" x2="1062" y2="579.5" stroke="#ffffff" stroke-width="1.3"/><line x1="621.5" y1="588.5" x2="1062" y2="588.5" stroke="#ffffff" stroke-width="1.3"/><line x1="621.5" y1="597.5" x2="1062" y2="597.5" stroke="#ffffff" stroke-width="1.3"/><line x1="621.5" y1="606.5" x2="1062" y2="606.5" stroke="#ffffff" stroke-width="1.3"/><line x1="621.5" y1="615.5" x2="1062" y2="615.5" stroke="#ffffff" stroke-width="1.3"/><line x1="621.5" y1="624.5" x2="1062" y2="624.5" stroke="#ffffff" stroke-width="1.3"/><line x1="621.5" y1="633.5" x2="1062" y2="633.5" stroke="#ffffff" stroke-width="1.3"/><line x1="621.5" y1="642.5" x2="1062" y2="642.5" stroke="#ffffff" stroke-width="1.3"/><line x1="621.5" y1="651.5" x2="1062" y2="651.5" stroke="#ffffff" stroke-width="1.3"/><line x1="621.5" y1="668.5" x2="1062" y2="668.5" stroke="#ffffff" stroke-width="1.3"/><line x1="621.5" y1="399.5" x2="621.5" y2="668.4" stroke="#ffffff" stroke-width="1.3"/><line x1="688.5" y1="399.5" x2="688.5" y2="668.4" stroke="#ffffff" stroke-width="1.3"/><line x1="725.5" y1="399.5" x2="725.5" y2="668.4" stroke="#ffffff" stroke-width="1.3"/><line x1="763.5" y1="399.5" x2="763.5" y2="507.4" stroke="#ffffff" stroke-width="1.3"/><line x1="763.5" y1="516.5" x2="763.5" y2="668.4" stroke="#ffffff" stroke-width="1.3"/><line x1="800.5" y1="399.5" x2="800.5" y2="668.4" stroke="#ffffff" stroke-width="1.3"/><line x1="837.5" y1="399.5" x2="837.5" y2="668.4" stroke="#ffffff" stroke-width="1.3"/><line x1="875.5" y1="399.5" x2="875.5" y2="668.4" stroke="#ffffff" stroke-width="1.3"/><line x1="912.5" y1="399.5" x2="912.5" y2="668.4" stroke="#ffffff" stroke-width="1.3"/><line x1="949.5" y1="399.5" x2="949.5" y2="668.4" stroke="#ffffff" stroke-width="1.3"/><line x1="986.5" y1="399.5" x2="986.5" y2="507.4" stroke="#ffffff" stroke-width="1.3"/><line x1="986.5" y1="516.5" x2="986.5" y2="668.4" stroke="#ffffff" stroke-width="1.3"/><line x1="1024.5" y1="399.5" x2="1024.5" y2="668.4" stroke="#ffffff" stroke-width="1.3"/><line x1="1062.5" y1="399.5" x2="1062.5" y2="668.4" stroke="#ffffff" stroke-width="1.3"/><text x="624" y="406" font-size="6.3" fill="#9a9a9a" text-anchor="start" font-weight="bold">1 母线参数.型</text><text x="624" y="514" font-size="6.3" fill="#b8b8b8" text-anchor="start" font-weight="bold">回(电缆)</text><text x="624" y="523" font-size="6.3" fill="#b8b8b8" text-anchor="start" font-weight="bold">回路编号(备)</text><text x="624" y="532" font-size="6.3" fill="#b8b8b8" text-anchor="start" font-weight="bold">回路额定电流(A)</text><text x="624" y="541" font-size="6.3" fill="#b8b8b8" text-anchor="start" font-weight="bold">断路器 额断路器 规格-1型(分)参数</text><text x="624" y="550" font-size="6.3" fill="#b8b8b8" text-anchor="start" font-weight="bold">隔离开关/式参数</text><text x="624" y="559" font-size="6.3" fill="#b8b8b8" text-anchor="start" font-weight="bold">接触器开关式参数</text><text x="624" y="568" font-size="6.3" fill="#b8b8b8" text-anchor="start" font-weight="bold">热继电器 与过保护参数</text><text x="624" y="577" font-size="6.3" fill="#b8b8b8" text-anchor="start" font-weight="bold">热继电器 与过保护参数范围</text><text x="624" y="586" font-size="6.3" fill="#b8b8b8" text-anchor="start" font-weight="bold">电流 电压 互感器型号</text><text x="624" y="595" font-size="6.3" fill="#b8b8b8" text-anchor="start" font-weight="bold">电流 电压 互感器变比</text><text x="624" y="604" font-size="6.3" fill="#b8b8b8" text-anchor="start" font-weight="bold">零序电流互感器型号</text><text x="624" y="613" font-size="6.3" fill="#b8b8b8" text-anchor="start" font-weight="bold">电缆型号</text><text x="624" y="622" font-size="6.3" fill="#b8b8b8" text-anchor="start" font-weight="bold">电缆芯数×截面(mm²)</text><text x="624" y="631" font-size="6.3" fill="#b8b8b8" text-anchor="start" font-weight="bold">电缆编号</text><text x="624" y="640" font-size="6.3" fill="#b8b8b8" text-anchor="start" font-weight="bold">电缆敷设</text><text x="624" y="649" font-size="6.3" fill="#b8b8b8" text-anchor="start" font-weight="bold">回路负荷容量</text><text x="624" y="662" font-size="6.3" fill="#b8b8b8" text-anchor="start" font-weight="bold">负载名称</text><text x="624" y="451" font-size="6" fill="#c8c8c8" text-anchor="start" >供 电 方式说明</text><text x="706.9" y="513.75" font-size="4.6" fill="#c4c4c4" text-anchor="middle" >YJV22</text><text x="763.0" y="513.75" font-size="4.6" fill="#c4c4c4" text-anchor="middle" >3P-160A</text><text x="819.05" y="513.75" font-size="4.6" fill="#c4c4c4" text-anchor="middle" >3x95+1x50</text><text x="856.5" y="513.75" font-size="4.6" fill="#c4c4c4" text-anchor="middle" >55kW</text><text x="894.0" y="513.75" font-size="4.6" fill="#c4c4c4" text-anchor="middle" >0.4kV</text><text x="931.1" y="513.75" font-size="4.6" fill="#c4c4c4" text-anchor="middle" >NH-250</text><text x="986.95" y="513.75" font-size="4.6" fill="#c4c4c4" text-anchor="middle" >16</text><text x="1043.15" y="513.75" font-size="4.6" fill="#c4c4c4" text-anchor="middle" >NH-250</text><text x="819.05" y="522.75" font-size="4.6" fill="#c4c4c4" text-anchor="middle" >YJV22</text><text x="706.9" y="531.6999999999999" font-size="4.6" fill="#c4c4c4" text-anchor="middle" >GCK-01</text><text x="744.25" y="531.6999999999999" font-size="4.6" fill="#c4c4c4" text-anchor="middle" >0.4kV</text><text x="781.75" y="531.6999999999999" font-size="4.6" fill="#c4c4c4" text-anchor="middle" >16</text><text x="819.05" y="531.6999999999999" font-size="4.6" fill="#c4c4c4" text-anchor="middle" >LMK-0.66</text><text x="856.5" y="531.6999999999999" font-size="4.6" fill="#c4c4c4" text-anchor="middle" >0.4kV</text><text x="894.0" y="531.6999999999999" font-size="4.6" fill="#c4c4c4" text-anchor="middle" >NH-250</text><text x="931.1" y="531.6999999999999" font-size="4.6" fill="#c4c4c4" text-anchor="middle" >3x95+1x50</text><text x="968.2" y="531.6999999999999" font-size="4.6" fill="#c4c4c4" text-anchor="middle" >3x95+1x50</text><text x="706.9" y="540.6499999999999" font-size="4.6" fill="#c4c4c4" text-anchor="middle" >NH-250</text><text x="744.25" y="540.6499999999999" font-size="4.6" fill="#c4c4c4" text-anchor="middle" >LMK-0.66</text><text x="781.75" y="540.6499999999999" font-size="4.6" fill="#c4c4c4" text-anchor="middle" >NH-250</text><text x="819.05" y="540.6499999999999" font-size="4.6" fill="#c4c4c4" text-anchor="middle" >16</text><text x="856.5" y="540.6499999999999" font-size="4.6" fill="#c4c4c4" text-anchor="middle" >3x95+1x50</text><text x="894.0" y="540.6499999999999" font-size="4.6" fill="#c4c4c4" text-anchor="middle" >0.4kV</text><text x="931.1" y="540.6499999999999" font-size="4.6" fill="#c4c4c4" text-anchor="middle" >GCK-01</text><text x="968.2" y="540.6499999999999" font-size="4.6" fill="#c4c4c4" text-anchor="middle" >NH-250</text><text x="1005.55" y="540.6499999999999" font-size="4.6" fill="#c4c4c4" text-anchor="middle" >LMK-0.66</text><text x="1043.15" y="540.6499999999999" font-size="4.6" fill="#c4c4c4" text-anchor="middle" >55kW</text><text x="744.25" y="549.55" font-size="4.6" fill="#c4c4c4" text-anchor="middle" >55kW</text><text x="781.75" y="549.55" font-size="4.6" fill="#c4c4c4" text-anchor="middle" >GCK-01</text><text x="819.05" y="549.55" font-size="4.6" fill="#c4c4c4" text-anchor="middle" >0.4kV</text><text x="856.5" y="549.55" font-size="4.6" fill="#c4c4c4" text-anchor="middle" >GCK-01</text><text x="894.0" y="549.55" font-size="4.6" fill="#c4c4c4" text-anchor="middle" >GCK-01</text><text x="931.1" y="549.55" font-size="4.6" fill="#c4c4c4" text-anchor="middle" >3x95+1x50</text><text x="968.2" y="549.55" font-size="4.6" fill="#c4c4c4" text-anchor="middle" >0.4kV</text><text x="1005.55" y="549.55" font-size="4.6" fill="#c4c4c4" text-anchor="middle" >LMK-0.66</text><text x="706.9" y="585.3" font-size="4.6" fill="#c4c4c4" text-anchor="middle" >0.4kV</text><text x="744.25" y="585.3" font-size="4.6" fill="#c4c4c4" text-anchor="middle" >16</text><text x="781.75" y="585.3" font-size="4.6" fill="#c4c4c4" text-anchor="middle" >3P-160A</text><text x="819.05" y="585.3" font-size="4.6" fill="#c4c4c4" text-anchor="middle" >200/5</text><text x="856.5" y="585.3" font-size="4.6" fill="#c4c4c4" text-anchor="middle" >3x95+1x50</text><text x="894.0" y="585.3" font-size="4.6" fill="#c4c4c4" text-anchor="middle" >3P-160A</text><text x="931.1" y="585.3" font-size="4.6" fill="#c4c4c4" text-anchor="middle" >16</text><text x="968.2" y="585.3" font-size="4.6" fill="#c4c4c4" text-anchor="middle" >NH-250</text><text x="1005.55" y="585.3" font-size="4.6" fill="#c4c4c4" text-anchor="middle" >GCK-01</text><text x="1043.15" y="585.3" font-size="4.6" fill="#c4c4c4" text-anchor="middle" >200/5</text><text x="706.9" y="594.3" font-size="4.6" fill="#c4c4c4" text-anchor="middle" >16</text><text x="744.25" y="594.3" font-size="4.6" fill="#c4c4c4" text-anchor="middle" >55kW</text><text x="781.75" y="594.3" font-size="4.6" fill="#c4c4c4" text-anchor="middle" >3P-160A</text><text x="819.05" y="594.3" font-size="4.6" fill="#c4c4c4" text-anchor="middle" >NH-250</text><text x="856.5" y="594.3" font-size="4.6" fill="#c4c4c4" text-anchor="middle" >GCK-01</text><text x="894.0" y="594.3" font-size="4.6" fill="#c4c4c4" text-anchor="middle" >GCK-01</text><text x="931.1" y="594.3" font-size="4.6" fill="#c4c4c4" text-anchor="middle" >55kW</text><text x="968.2" y="594.3" font-size="4.6" fill="#c4c4c4" text-anchor="middle" >LMK-0.66</text><text x="1005.55" y="594.3" font-size="4.6" fill="#c4c4c4" text-anchor="middle" >YJV22</text><text x="1043.15" y="594.3" font-size="4.6" fill="#c4c4c4" text-anchor="middle" >NH-250</text><text x="744.25" y="603.3" font-size="4.6" fill="#c4c4c4" text-anchor="middle" >16</text><text x="781.75" y="603.3" font-size="4.6" fill="#c4c4c4" text-anchor="middle" >CT 100/5</text><text x="856.5" y="603.3" font-size="4.6" fill="#c4c4c4" text-anchor="middle" >NH-250</text><text x="894.0" y="603.3" font-size="4.6" fill="#c4c4c4" text-anchor="middle" >GCK-01</text><text x="931.1" y="603.3" font-size="4.6" fill="#c4c4c4" text-anchor="middle" >0.4kV</text><text x="968.2" y="603.3" font-size="4.6" fill="#c4c4c4" text-anchor="middle" >GCK-01</text><text x="1005.55" y="603.3" font-size="4.6" fill="#c4c4c4" text-anchor="middle" >LMK-0.66</text><rect x="742.25" y="618.5" width="4" height="1.3" fill="#d8d8d8"/><text x="781.75" y="621.3" font-size="4.6" fill="#c4c4c4" text-anchor="middle" >55kW</text><text x="856.5" y="621.3" font-size="4.6" fill="#c4c4c4" text-anchor="middle" >16</text><text x="894.0" y="621.3" font-size="4.6" fill="#c4c4c4" text-anchor="middle" >3x95+1x50</text><text x="931.1" y="621.3" font-size="4.6" fill="#c4c4c4" text-anchor="middle" >YJV22</text><rect x="966.2" y="618.5" width="4" height="1.3" fill="#d8d8d8"/><text x="744.25" y="630.3" font-size="4.6" fill="#c4c4c4" text-anchor="middle" >GCK-01</text><rect x="779.75" y="627.5" width="4" height="1.3" fill="#d8d8d8"/><text x="856.5" y="630.3" font-size="4.6" fill="#c4c4c4" text-anchor="middle" >YJV22</text><text x="894.0" y="630.3" font-size="4.6" fill="#c4c4c4" text-anchor="middle" >200/5</text><text x="931.1" y="630.3" font-size="4.6" fill="#c4c4c4" text-anchor="middle" >LMK-0.66</text><text x="968.2" y="630.3" font-size="4.6" fill="#c4c4c4" text-anchor="middle" >3P-160A</text><text x="706.9" y="648.3" font-size="4.6" fill="#c4c4c4" text-anchor="middle" >CT 100/5</text><text x="744.25" y="648.3" font-size="4.6" fill="#c4c4c4" text-anchor="middle" >LMK-0.66</text><text x="781.75" y="648.3" font-size="4.6" fill="#c4c4c4" text-anchor="middle" >NH-250</text><text x="819.05" y="648.3" font-size="4.6" fill="#c4c4c4" text-anchor="middle" >GCK-01</text><text x="856.5" y="648.3" font-size="4.6" fill="#c4c4c4" text-anchor="middle" >200/5</text><text x="894.0" y="648.3" font-size="4.6" fill="#c4c4c4" text-anchor="middle" >16</text><rect x="929.1" y="645.5" width="4" height="1.3" fill="#d8d8d8"/><text x="968.2" y="648.3" font-size="4.6" fill="#c4c4c4" text-anchor="middle" >YJV22</text><text x="1005.55" y="648.3" font-size="4.6" fill="#c4c4c4" text-anchor="middle" >CT 100/5</text><rect x="704.9" y="658.7" width="4" height="1.3" fill="#d8d8d8"/><text x="744.25" y="661.5" font-size="4.6" fill="#c4c4c4" text-anchor="middle" >200/5</text><text x="781.75" y="661.5" font-size="4.6" fill="#c4c4c4" text-anchor="middle" >GCK-01</text><text x="819.05" y="661.5" font-size="4.6" fill="#c4c4c4" text-anchor="middle" >NH-250</text><text x="856.5" y="661.5" font-size="4.6" fill="#c4c4c4" text-anchor="middle" >NH-250</text><text x="894.0" y="661.5" font-size="4.6" fill="#c4c4c4" text-anchor="middle" >16</text><text x="931.1" y="661.5" font-size="4.6" fill="#c4c4c4" text-anchor="middle" >3x95+1x50</text><text x="968.2" y="661.5" font-size="4.6" fill="#c4c4c4" text-anchor="middle" >3P-160A</text><text x="1005.55" y="661.5" font-size="4.6" fill="#c4c4c4" text-anchor="middle" >YJV22</text><text x="1043.15" y="661.5" font-size="4.6" fill="#c4c4c4" text-anchor="middle" >3P-160A</text><text x="845" y="612.5" font-size="4.6" fill="#c4c4c4" text-anchor="middle" >ZRC-YJV22-0.6/1kV 3x95+1x50   ZRC-YJV22-0.6/1kV 3x70+1x35   ZRC-YJV22 3x50</text><line x1="700" y1="402.5" x2="1062" y2="402.5" stroke="#ffff00" stroke-width="1.3"/><line x1="1013" y1="400.5" x2="1062" y2="400.5" stroke="#ffff00" stroke-width="1.0"/><rect x="703.5" y="400.5" width="8" height="4" fill="none" stroke="#ffff00" stroke-width="1.1"/><rect x="720" y="400.6" width="7" height="4" fill="none" stroke="#ffff00" stroke-width="1.1"/><rect x="815.5" y="400.5" width="8" height="4" fill="none" stroke="#ffff00" stroke-width="1.1"/><rect x="832" y="400.6" width="7" height="4" fill="none" stroke="#ffff00" stroke-width="1.1"/><line x1="688.3" y1="486.5" x2="1062" y2="486.5" stroke="#ffff00" stroke-width="1.3"/><path d="M692.5 377.5 H707 M692.5 377.5 V394 M694.5 394 V486.6 M723.5 402.6 V484.5 H707" fill="none" stroke="#ffff00" stroke-width="1.2"/><path d="M797 384.5 H820.5 V402 M801 388.5 H817.5 V402 M797 391.5 H806.5 V486.6 M819 484.5 H834.5 V402.6" fill="none" stroke="#ffff00" stroke-width="1.2"/><path d="M795 386 l4 -3 v6z" fill="none" stroke="#ffff00" stroke-width="1"/><circle cx="694.5" cy="486.6" r="1.8" fill="#ffff00"/><circle cx="806" cy="486.6" r="1.8" fill="#ffff00"/><line x1="692" y1="345.5" x2="707" y2="345.5" stroke="#ffff00" stroke-width="1.2"/><line x1="707.5" y1="340" x2="707.5" y2="349" stroke="#ff0000" stroke-width="1.3"/><rect x="705.0" y="344.0" width="4" height="3" fill="#ff0000"/><circle cx="707" cy="350.5" r="3.6" fill="#00ff00"/><line x1="707.5" y1="345" x2="707.5" y2="357" stroke="#ffff00" stroke-width="1.0"/><ellipse cx="707" cy="363.5" rx="7.4" ry="6.6" fill="none" stroke="#00ff00" stroke-width="3"/><ellipse cx="707" cy="376" rx="7.4" ry="6.6" fill="none" stroke="#00ff00" stroke-width="3"/><path d="M704 365 l3 -4 3 4z" fill="none" stroke="#ffff00" stroke-width="0.9"/><line x1="707.5" y1="383" x2="707.5" y2="402.6" stroke="#ffff00" stroke-width="1.2"/><polygon points="687,384 692,380 697,382 697,389 692,390" fill="#00ff00"/><polygon points="690,391 695,392 695,397 692,398 689,396" fill="#00ff00"/><text x="663" y="362" font-size="5" fill="#9a0000" text-anchor="start" font-weight="bold" letter-spacing="0.6">±5% 10kV</text><text x="676" y="386.5" font-size="4.6" fill="#a8a8a8" text-anchor="start" >ZD-1</text><text x="716" y="359" font-size="4.6" fill="#a8a8a8" text-anchor="start" >SCB11-1250</text><text x="716" y="363.5" font-size="4.6" fill="#a8a8a8" text-anchor="start" >Dyn11</text><text x="716" y="368" font-size="4.6" fill="#a8a8a8" text-anchor="start" >10/0.4kV</text><text x="716" y="372.5" font-size="4.6" fill="#a8a8a8" text-anchor="start" >Uk=6%</text><text x="716" y="377" font-size="4.6" fill="#a8a8a8" text-anchor="start" >IP20</text><text x="646" y="499.5" font-size="8.4" fill="#ff0000" text-anchor="start" font-weight="bold" textLength="104" lengthAdjust="spacingAndGlyphs">ZRC-YJV22-0.6/1kV-3x95+1x50</text><text x="688" y="499.5" font-size="8.4" fill="#ff0000" text-anchor="start" textLength="104" lengthAdjust="spacingAndGlyphs">ZRC-YJV22-0.6/1kV-3x95+1x50</text><text x="731" y="499.5" font-size="8.4" fill="#ff0000" text-anchor="start" textLength="104" lengthAdjust="spacingAndGlyphs">ZRC-YJV22-0.6/1kV-3x95+1x50</text><text x="773" y="499.5" font-size="8.4" fill="#ff0000" text-anchor="start" textLength="104" lengthAdjust="spacingAndGlyphs">ZRC-YJV22-0.6/1kV-3x95+1x50</text><text x="816" y="499.5" font-size="8.4" fill="#ff0000" text-anchor="start" textLength="104" lengthAdjust="spacingAndGlyphs">ZRC-YJV22-0.6/1kV-3x95+1x50</text><text x="858" y="499.5" font-size="8.4" fill="#ff0000" text-anchor="start" font-weight="bold" textLength="104" lengthAdjust="spacingAndGlyphs">ZRC-YJV22-0.6/1kV-3x95+1x50</text><line x1="707.5" y1="402.6" x2="707.5" y2="484.6" stroke="#ffff00" stroke-width="1.2"/><polygon points="707.0,411.5 712.5,416.0 710.0,417.0 712.5,420.5 707.0,423.5 701.5,420.5 704.0,417.0 701.5,416.0" fill="#00ff00"/><rect x="705.0" y="429.0" width="4" height="4" fill="#ff0000"/><polygon points="702.0,437.0 708.0,436.0 710.0,439.0 707.5,441.0 709.5,444.0 705.5,446.0 704.0,442.0 702.0,440.0" fill="#00ff00"/><rect x="705.0" y="450.0" width="4" height="4" fill="#ff0000"/><polygon points="707.0,456.5 712.5,461.0 710.0,462.0 712.5,465.5 707.0,468.5 701.5,465.5 704.0,462.0 701.5,461.0" fill="#00ff00"/><line x1="698.5" y1="458" x2="698.5" y2="467" stroke="#ff0000" stroke-width="1.2"/><rect x="695.75" y="463.0" width="4.5" height="4" fill="#ff0000"/><line x1="716.5" y1="458" x2="716.5" y2="467" stroke="#ff0000" stroke-width="1.2"/><rect x="713.75" y="463.0" width="4.5" height="4" fill="#ff0000"/><polygon points="693,466.5 699,466 703.5,470.5 699,475.5 693,475 692,470.5" fill="#00ff00"/><line x1="698.5" y1="466" x2="698.5" y2="475.5" stroke="#ffff00" stroke-width="1"/><polygon points="702,466.5 708,466 712.5,470.5 708,475.5 702,475 701,470.5" fill="#00ff00"/><line x1="707.5" y1="466" x2="707.5" y2="475.5" stroke="#ffff00" stroke-width="1"/><polygon points="711.5,466.5 717.5,466 722.0,470.5 717.5,475.5 711.5,475 710.5,470.5" fill="#00ff00"/><line x1="716.5" y1="466" x2="716.5" y2="475.5" stroke="#ffff00" stroke-width="1"/><line x1="695" y1="471.5" x2="720" y2="471.5" stroke="#ffff00" stroke-width="0.8"/><polygon points="693,474.5 699,474 703.5,478.5 699,483.5 693,483 692,478.5" fill="#00ff00"/><line x1="698.5" y1="474" x2="698.5" y2="483.5" stroke="#ffff00" stroke-width="1"/><polygon points="702,474.5 708,474 712.5,478.5 708,483.5 702,483 701,478.5" fill="#00ff00"/><line x1="707.5" y1="474" x2="707.5" y2="483.5" stroke="#ffff00" stroke-width="1"/><polygon points="711.5,474.5 717.5,474 722.0,478.5 717.5,483.5 711.5,483 710.5,478.5" fill="#00ff00"/><line x1="716.5" y1="474" x2="716.5" y2="483.5" stroke="#ffff00" stroke-width="1"/><line x1="695" y1="479.5" x2="720" y2="479.5" stroke="#ffff00" stroke-width="0.8"/><rect x="710" y="439" width="22" height="2.5" fill="#7a0000" opacity="0.45"/><rect x="685" y="476.5" width="14" height="2" fill="#6a0000" opacity="0.4"/><line x1="744.5" y1="402.6" x2="744.5" y2="507" stroke="#ffff00" stroke-width="1.2"/><polygon points="744.4,411.5 749.9,416.0 747.4,417.0 749.9,420.5 744.4,423.5 738.9,420.5 741.4,417.0 738.9,416.0" fill="#00ff00"/><rect x="742.4" y="429.0" width="4" height="4" fill="#ff0000"/><polygon points="739.4,437.0 745.4,436.0 747.4,439.0 744.9,441.0 746.9,444.0 742.9,446.0 741.4,442.0 739.4,440.0" fill="#00ff00"/><rect x="742.4" y="450.0" width="4" height="4" fill="#ff0000"/><polygon points="744.4,457.5 749.9,462.0 747.4,463.0 749.9,466.5 744.4,469.5 738.9,466.5 741.4,463.0 738.9,462.0" fill="#00ff00"/><line x1="735.5" y1="461.5" x2="735.5" y2="470.5" stroke="#ff0000" stroke-width="1.2"/><rect x="733.15" y="466.5" width="4.5" height="4" fill="#ff0000"/><line x1="753.5" y1="461.5" x2="753.5" y2="470.5" stroke="#ff0000" stroke-width="1.2"/><rect x="751.15" y="466.5" width="4.5" height="4" fill="#ff0000"/><polygon points="730.4,470.0 736.4,469.5 740.9,474.0 736.4,479.0 730.4,478.5 729.4,474.0" fill="#00ff00"/><line x1="735.5" y1="469.5" x2="735.5" y2="479.0" stroke="#ffff00" stroke-width="1"/><polygon points="739.4,470.0 745.4,469.5 749.9,474.0 745.4,479.0 739.4,478.5 738.4,474.0" fill="#00ff00"/><line x1="744.5" y1="469.5" x2="744.5" y2="479.0" stroke="#ffff00" stroke-width="1"/><polygon points="748.9,470.0 754.9,469.5 759.4,474.0 754.9,479.0 748.9,478.5 747.9,474.0" fill="#00ff00"/><line x1="753.5" y1="469.5" x2="753.5" y2="479.0" stroke="#ffff00" stroke-width="1"/><line x1="732.4" y1="474.5" x2="757.4" y2="474.5" stroke="#ffff00" stroke-width="0.8"/><line x1="744.5" y1="479" x2="744.5" y2="487" stroke="#ff0000" stroke-width="2.8"/><line x1="744.5" y1="479" x2="744.5" y2="487" stroke="#ffffff" stroke-width="0.6"/><rect x="747.4" y="439" width="22" height="2.5" fill="#7a0000" opacity="0.45"/><rect x="722.4" y="476.5" width="14" height="2" fill="#6a0000" opacity="0.4"/><line x1="781.5" y1="402.6" x2="781.5" y2="507" stroke="#ffff00" stroke-width="1.2"/><polygon points="781.7,411.5 787.2,416.0 784.7,417.0 787.2,420.5 781.7,423.5 776.2,420.5 778.7,417.0 776.2,416.0" fill="#00ff00"/><rect x="779.7" y="429.0" width="4" height="4" fill="#ff0000"/><polygon points="776.7,437.0 782.7,436.0 784.7,439.0 782.2,441.0 784.2,444.0 780.2,446.0 778.7,442.0 776.7,440.0" fill="#00ff00"/><rect x="779.7" y="450.0" width="4" height="4" fill="#ff0000"/><polygon points="781.7,457.5 787.2,462.0 784.7,463.0 787.2,466.5 781.7,469.5 776.2,466.5 778.7,463.0 776.2,462.0" fill="#00ff00"/><line x1="772.5" y1="461.5" x2="772.5" y2="470.5" stroke="#ff0000" stroke-width="1.2"/><rect x="770.45" y="466.5" width="4.5" height="4" fill="#ff0000"/><line x1="790.5" y1="461.5" x2="790.5" y2="470.5" stroke="#ff0000" stroke-width="1.2"/><rect x="788.45" y="466.5" width="4.5" height="4" fill="#ff0000"/><polygon points="767.7,470.0 773.7,469.5 778.2,474.0 773.7,479.0 767.7,478.5 766.7,474.0" fill="#00ff00"/><line x1="772.5" y1="469.5" x2="772.5" y2="479.0" stroke="#ffff00" stroke-width="1"/><polygon points="776.7,470.0 782.7,469.5 787.2,474.0 782.7,479.0 776.7,478.5 775.7,474.0" fill="#00ff00"/><line x1="781.5" y1="469.5" x2="781.5" y2="479.0" stroke="#ffff00" stroke-width="1"/><polygon points="786.2,470.0 792.2,469.5 796.7,474.0 792.2,479.0 786.2,478.5 785.2,474.0" fill="#00ff00"/><line x1="791.5" y1="469.5" x2="791.5" y2="479.0" stroke="#ffff00" stroke-width="1"/><line x1="769.7" y1="474.5" x2="794.7" y2="474.5" stroke="#ffff00" stroke-width="0.8"/><line x1="781.5" y1="479" x2="781.5" y2="487" stroke="#ff0000" stroke-width="2.8"/><line x1="781.5" y1="479" x2="781.5" y2="487" stroke="#ffffff" stroke-width="0.6"/><rect x="784.7" y="439" width="22" height="2.5" fill="#7a0000" opacity="0.45"/><rect x="759.7" y="476.5" width="14" height="2" fill="#6a0000" opacity="0.4"/><line x1="819.5" y1="402.6" x2="819.5" y2="484.6" stroke="#ffff00" stroke-width="1.2"/><polygon points="819.0,411.5 824.5,416.0 822.0,417.0 824.5,420.5 819.0,423.5 813.5,420.5 816.0,417.0 813.5,416.0" fill="#00ff00"/><rect x="817.0" y="429.0" width="4" height="4" fill="#ff0000"/><polygon points="814.0,437.0 820.0,436.0 822.0,439.0 819.5,441.0 821.5,444.0 817.5,446.0 816.0,442.0 814.0,440.0" fill="#00ff00"/><rect x="817.0" y="450.0" width="4" height="4" fill="#ff0000"/><polygon points="819.0,456.5 824.5,461.0 822.0,462.0 824.5,465.5 819.0,468.5 813.5,465.5 816.0,462.0 813.5,461.0" fill="#00ff00"/><line x1="810.5" y1="458" x2="810.5" y2="467" stroke="#ff0000" stroke-width="1.2"/><rect x="807.75" y="463.0" width="4.5" height="4" fill="#ff0000"/><line x1="828.5" y1="458" x2="828.5" y2="467" stroke="#ff0000" stroke-width="1.2"/><rect x="825.75" y="463.0" width="4.5" height="4" fill="#ff0000"/><polygon points="805,466.5 811,466 815.5,470.5 811,475.5 805,475 804,470.5" fill="#00ff00"/><line x1="810.5" y1="466" x2="810.5" y2="475.5" stroke="#ffff00" stroke-width="1"/><polygon points="814,466.5 820,466 824.5,470.5 820,475.5 814,475 813,470.5" fill="#00ff00"/><line x1="819.5" y1="466" x2="819.5" y2="475.5" stroke="#ffff00" stroke-width="1"/><polygon points="823.5,466.5 829.5,466 834.0,470.5 829.5,475.5 823.5,475 822.5,470.5" fill="#00ff00"/><line x1="828.5" y1="466" x2="828.5" y2="475.5" stroke="#ffff00" stroke-width="1"/><line x1="807" y1="471.5" x2="832" y2="471.5" stroke="#ffff00" stroke-width="0.8"/><rect x="822" y="439" width="22" height="2.5" fill="#7a0000" opacity="0.45"/><rect x="797" y="476.5" width="14" height="2" fill="#6a0000" opacity="0.4"/><line x1="856.5" y1="402.6" x2="856.5" y2="507" stroke="#ffff00" stroke-width="1.2"/><polygon points="856.5,411.5 862.0,416.0 859.5,417.0 862.0,420.5 856.5,423.5 851.0,420.5 853.5,417.0 851.0,416.0" fill="#00ff00"/><rect x="854.5" y="429.0" width="4" height="4" fill="#ff0000"/><polygon points="851.5,437.0 857.5,436.0 859.5,439.0 857.0,441.0 859.0,444.0 855.0,446.0 853.5,442.0 851.5,440.0" fill="#00ff00"/><rect x="854.5" y="450.0" width="4" height="4" fill="#ff0000"/><polygon points="856.5,457.5 862.0,462.0 859.5,463.0 862.0,466.5 856.5,469.5 851.0,466.5 853.5,463.0 851.0,462.0" fill="#00ff00"/><line x1="847.5" y1="461.5" x2="847.5" y2="470.5" stroke="#ff0000" stroke-width="1.2"/><rect x="845.25" y="466.5" width="4.5" height="4" fill="#ff0000"/><line x1="865.5" y1="461.5" x2="865.5" y2="470.5" stroke="#ff0000" stroke-width="1.2"/><rect x="863.25" y="466.5" width="4.5" height="4" fill="#ff0000"/><polygon points="842.5,470.0 848.5,469.5 853.0,474.0 848.5,479.0 842.5,478.5 841.5,474.0" fill="#00ff00"/><line x1="847.5" y1="469.5" x2="847.5" y2="479.0" stroke="#ffff00" stroke-width="1"/><polygon points="851.5,470.0 857.5,469.5 862.0,474.0 857.5,479.0 851.5,478.5 850.5,474.0" fill="#00ff00"/><line x1="856.5" y1="469.5" x2="856.5" y2="479.0" stroke="#ffff00" stroke-width="1"/><polygon points="861.0,470.0 867.0,469.5 871.5,474.0 867.0,479.0 861.0,478.5 860.0,474.0" fill="#00ff00"/><line x1="866.5" y1="469.5" x2="866.5" y2="479.0" stroke="#ffff00" stroke-width="1"/><line x1="844.5" y1="474.5" x2="869.5" y2="474.5" stroke="#ffff00" stroke-width="0.8"/><line x1="856.5" y1="479" x2="856.5" y2="487" stroke="#ff0000" stroke-width="2.8"/><line x1="856.5" y1="479" x2="856.5" y2="487" stroke="#ffffff" stroke-width="0.6"/><rect x="859.5" y="439" width="22" height="2.5" fill="#7a0000" opacity="0.45"/><rect x="834.5" y="476.5" width="14" height="2" fill="#6a0000" opacity="0.4"/><line x1="893.5" y1="402.6" x2="893.5" y2="507" stroke="#ffff00" stroke-width="1.2"/><polygon points="893.7,411.5 899.2,416.0 896.7,417.0 899.2,420.5 893.7,423.5 888.2,420.5 890.7,417.0 888.2,416.0" fill="#00ff00"/><rect x="891.7" y="429.0" width="4" height="4" fill="#ff0000"/><polygon points="888.7,437.0 894.7,436.0 896.7,439.0 894.2,441.0 896.2,444.0 892.2,446.0 890.7,442.0 888.7,440.0" fill="#00ff00"/><rect x="891.7" y="450.0" width="4" height="4" fill="#ff0000"/><polygon points="893.7,457.5 899.2,462.0 896.7,463.0 899.2,466.5 893.7,469.5 888.2,466.5 890.7,463.0 888.2,462.0" fill="#00ff00"/><line x1="884.5" y1="461.5" x2="884.5" y2="470.5" stroke="#ff0000" stroke-width="1.2"/><rect x="882.45" y="466.5" width="4.5" height="4" fill="#ff0000"/><line x1="902.5" y1="461.5" x2="902.5" y2="470.5" stroke="#ff0000" stroke-width="1.2"/><rect x="900.45" y="466.5" width="4.5" height="4" fill="#ff0000"/><polygon points="879.7,470.0 885.7,469.5 890.2,474.0 885.7,479.0 879.7,478.5 878.7,474.0" fill="#00ff00"/><line x1="884.5" y1="469.5" x2="884.5" y2="479.0" stroke="#ffff00" stroke-width="1"/><polygon points="888.7,470.0 894.7,469.5 899.2,474.0 894.7,479.0 888.7,478.5 887.7,474.0" fill="#00ff00"/><line x1="893.5" y1="469.5" x2="893.5" y2="479.0" stroke="#ffff00" stroke-width="1"/><polygon points="898.2,470.0 904.2,469.5 908.7,474.0 904.2,479.0 898.2,478.5 897.2,474.0" fill="#00ff00"/><line x1="903.5" y1="469.5" x2="903.5" y2="479.0" stroke="#ffff00" stroke-width="1"/><line x1="881.7" y1="474.5" x2="906.7" y2="474.5" stroke="#ffff00" stroke-width="0.8"/><line x1="893.5" y1="479" x2="893.5" y2="487" stroke="#ff0000" stroke-width="2.8"/><line x1="893.5" y1="479" x2="893.5" y2="487" stroke="#ffffff" stroke-width="0.6"/><rect x="896.7" y="439" width="22" height="2.5" fill="#7a0000" opacity="0.45"/><rect x="871.7" y="476.5" width="14" height="2" fill="#6a0000" opacity="0.4"/><line x1="931.5" y1="402.6" x2="931.5" y2="507" stroke="#ffff00" stroke-width="1.2"/><polygon points="931.3,411.5 936.8,416.0 934.3,417.0 936.8,420.5 931.3,423.5 925.8,420.5 928.3,417.0 925.8,416.0" fill="#00ff00"/><rect x="929.3" y="429.0" width="4" height="4" fill="#ff0000"/><polygon points="926.3,437.0 932.3,436.0 934.3,439.0 931.8,441.0 933.8,444.0 929.8,446.0 928.3,442.0 926.3,440.0" fill="#00ff00"/><rect x="929.3" y="450.0" width="4" height="4" fill="#ff0000"/><polygon points="931.3,457.5 936.8,462.0 934.3,463.0 936.8,466.5 931.3,469.5 925.8,466.5 928.3,463.0 925.8,462.0" fill="#00ff00"/><line x1="922.5" y1="461.5" x2="922.5" y2="470.5" stroke="#ff0000" stroke-width="1.2"/><rect x="920.05" y="466.5" width="4.5" height="4" fill="#ff0000"/><line x1="940.5" y1="461.5" x2="940.5" y2="470.5" stroke="#ff0000" stroke-width="1.2"/><rect x="938.05" y="466.5" width="4.5" height="4" fill="#ff0000"/><polygon points="917.3,470.0 923.3,469.5 927.8,474.0 923.3,479.0 917.3,478.5 916.3,474.0" fill="#00ff00"/><line x1="922.5" y1="469.5" x2="922.5" y2="479.0" stroke="#ffff00" stroke-width="1"/><polygon points="926.3,470.0 932.3,469.5 936.8,474.0 932.3,479.0 926.3,478.5 925.3,474.0" fill="#00ff00"/><line x1="931.5" y1="469.5" x2="931.5" y2="479.0" stroke="#ffff00" stroke-width="1"/><polygon points="935.8,470.0 941.8,469.5 946.3,474.0 941.8,479.0 935.8,478.5 934.8,474.0" fill="#00ff00"/><line x1="940.5" y1="469.5" x2="940.5" y2="479.0" stroke="#ffff00" stroke-width="1"/><line x1="919.3" y1="474.5" x2="944.3" y2="474.5" stroke="#ffff00" stroke-width="0.8"/><line x1="931.5" y1="479" x2="931.5" y2="487" stroke="#ff0000" stroke-width="2.8"/><line x1="931.5" y1="479" x2="931.5" y2="487" stroke="#ffffff" stroke-width="0.6"/><rect x="934.3" y="439" width="22" height="2.5" fill="#7a0000" opacity="0.45"/><rect x="909.3" y="476.5" width="14" height="2" fill="#6a0000" opacity="0.4"/><line x1="968.5" y1="402.6" x2="968.5" y2="507" stroke="#ffff00" stroke-width="1.2"/><polygon points="968.4,411.5 973.9,416.0 971.4,417.0 973.9,420.5 968.4,423.5 962.9,420.5 965.4,417.0 962.9,416.0" fill="#00ff00"/><rect x="966.4" y="429.0" width="4" height="4" fill="#ff0000"/><polygon points="963.4,437.0 969.4,436.0 971.4,439.0 968.9,441.0 970.9,444.0 966.9,446.0 965.4,442.0 963.4,440.0" fill="#00ff00"/><rect x="966.4" y="450.0" width="4" height="4" fill="#ff0000"/><polygon points="968.4,457.5 973.9,462.0 971.4,463.0 973.9,466.5 968.4,469.5 962.9,466.5 965.4,463.0 962.9,462.0" fill="#00ff00"/><line x1="959.5" y1="461.5" x2="959.5" y2="470.5" stroke="#ff0000" stroke-width="1.2"/><rect x="957.15" y="466.5" width="4.5" height="4" fill="#ff0000"/><line x1="977.5" y1="461.5" x2="977.5" y2="470.5" stroke="#ff0000" stroke-width="1.2"/><rect x="975.15" y="466.5" width="4.5" height="4" fill="#ff0000"/><polygon points="954.4,470.0 960.4,469.5 964.9,474.0 960.4,479.0 954.4,478.5 953.4,474.0" fill="#00ff00"/><line x1="959.5" y1="469.5" x2="959.5" y2="479.0" stroke="#ffff00" stroke-width="1"/><polygon points="963.4,470.0 969.4,469.5 973.9,474.0 969.4,479.0 963.4,478.5 962.4,474.0" fill="#00ff00"/><line x1="968.5" y1="469.5" x2="968.5" y2="479.0" stroke="#ffff00" stroke-width="1"/><polygon points="972.9,470.0 978.9,469.5 983.4,474.0 978.9,479.0 972.9,478.5 971.9,474.0" fill="#00ff00"/><line x1="977.5" y1="469.5" x2="977.5" y2="479.0" stroke="#ffff00" stroke-width="1"/><line x1="956.4" y1="474.5" x2="981.4" y2="474.5" stroke="#ffff00" stroke-width="0.8"/><line x1="968.5" y1="479" x2="968.5" y2="487" stroke="#ff0000" stroke-width="2.8"/><line x1="968.5" y1="479" x2="968.5" y2="487" stroke="#ffffff" stroke-width="0.6"/><rect x="971.4" y="439" width="22" height="2.5" fill="#7a0000" opacity="0.45"/><rect x="946.4" y="476.5" width="14" height="2" fill="#6a0000" opacity="0.4"/><line x1="1005.5" y1="402.6" x2="1005.5" y2="507" stroke="#ffff00" stroke-width="1.2"/><polygon points="1005.4,411.5 1010.9,416.0 1008.4,417.0 1010.9,420.5 1005.4,423.5 999.9,420.5 1002.4,417.0 999.9,416.0" fill="#00ff00"/><rect x="1003.4" y="429.0" width="4" height="4" fill="#ff0000"/><polygon points="1000.4,437.0 1006.4,436.0 1008.4,439.0 1005.9,441.0 1007.9,444.0 1003.9,446.0 1002.4,442.0 1000.4,440.0" fill="#00ff00"/><rect x="1003.4" y="450.0" width="4" height="4" fill="#ff0000"/><polygon points="1005.4,457.5 1010.9,462.0 1008.4,463.0 1010.9,466.5 1005.4,469.5 999.9,466.5 1002.4,463.0 999.9,462.0" fill="#00ff00"/><line x1="996.5" y1="461.5" x2="996.5" y2="470.5" stroke="#ff0000" stroke-width="1.2"/><rect x="994.15" y="466.5" width="4.5" height="4" fill="#ff0000"/><line x1="1014.5" y1="461.5" x2="1014.5" y2="470.5" stroke="#ff0000" stroke-width="1.2"/><rect x="1012.15" y="466.5" width="4.5" height="4" fill="#ff0000"/><polygon points="991.4,470.0 997.4,469.5 1001.9,474.0 997.4,479.0 991.4,478.5 990.4,474.0" fill="#00ff00"/><line x1="996.5" y1="469.5" x2="996.5" y2="479.0" stroke="#ffff00" stroke-width="1"/><polygon points="1000.4,470.0 1006.4,469.5 1010.9,474.0 1006.4,479.0 1000.4,478.5 999.4,474.0" fill="#00ff00"/><line x1="1005.5" y1="469.5" x2="1005.5" y2="479.0" stroke="#ffff00" stroke-width="1"/><polygon points="1009.9,470.0 1015.9,469.5 1020.4,474.0 1015.9,479.0 1009.9,478.5 1008.9,474.0" fill="#00ff00"/><line x1="1014.5" y1="469.5" x2="1014.5" y2="479.0" stroke="#ffff00" stroke-width="1"/><line x1="993.4" y1="474.5" x2="1018.4" y2="474.5" stroke="#ffff00" stroke-width="0.8"/><line x1="1005.5" y1="479" x2="1005.5" y2="487" stroke="#ff0000" stroke-width="2.8"/><line x1="1005.5" y1="479" x2="1005.5" y2="487" stroke="#ffffff" stroke-width="0.6"/><rect x="1008.4" y="439" width="22" height="2.5" fill="#7a0000" opacity="0.45"/><rect x="983.4" y="476.5" width="14" height="2" fill="#6a0000" opacity="0.4"/><line x1="1043.5" y1="402.6" x2="1043.5" y2="446" stroke="#ffff00" stroke-width="1.2"/><polygon points="1043.0,415.4 1047.7,419.2 1045.5,420.1 1047.7,423.1 1043.0,425.6 1038.3,423.1 1040.5,420.1 1038.3,419.2" fill="#00ff00"/><line x1="1043.5" y1="424" x2="1043.5" y2="431" stroke="#ff0000" stroke-width="2.4"/><rect x="1039" y="430" width="8" height="11" rx="2" fill="#00ff00"/><line x1="1043.5" y1="441" x2="1043.5" y2="447" stroke="#ff0000" stroke-width="2.4"/><ellipse cx="1043" cy="450.5" rx="4" ry="4" fill="none" stroke="#00ff00" stroke-width="3"/><ellipse cx="1043" cy="457.5" rx="4" ry="4" fill="none" stroke="#00ff00" stroke-width="3"/><rect x="1047" y="440" width="16" height="2.5" fill="#6a0000"/><rect x="1029" y="452" width="36" height="2.5" fill="#6a0000" opacity="0.8"/><polygon points="852.5,489 860.5,489 861.5,495 857.5,498 861.5,501 856.5,504 851.5,501 852.5,495" fill="#00ff00"/><polygon points="889.7,489 897.7,489 898.7,495 894.7,498 898.7,501 893.7,504 888.7,501 889.7,495" fill="#00ff00"/><polygon points="927.3,489 935.3,489 936.3,495 932.3,498 936.3,501 931.3,504 926.3,501 927.3,495" fill="#00ff00"/><polygon points="964.4,489 972.4,489 973.4,495 969.4,498 973.4,501 968.4,504 963.4,501 964.4,495" fill="#00ff00"/><polygon points="741.4,489 747.4,489 748.4,496 744.4,503 740.4,496" fill="#00ff00"/><polygon points="778.7,489 784.7,489 785.7,496 781.7,503 777.7,496" fill="#00ff00"/><polygon points="1001,493 1006,491 1010,496 1007,503 1002,502" fill="#00ff00"/><rect x="1003.5" y="488" width="4" height="4" fill="#ff0000"/><rect x="724.25" y="503.0" width="3.5" height="4" fill="#ff0000"/><rect x="798.85" y="503.0" width="3.5" height="4" fill="#ff0000"/><rect x="835.85" y="503.0" width="3.5" height="4" fill="#ff0000"/><rect x="873.05" y="503.0" width="3.5" height="4" fill="#ff0000"/><rect x="910.05" y="503.0" width="3.5" height="4" fill="#ff0000"/><rect x="948.15" y="503.0" width="3.5" height="4" fill="#ff0000"/><rect x="1021.95" y="503.0" width="3.5" height="4" fill="#ff0000"/><rect x="1059.75" y="503.0" width="3.5" height="4" fill="#ff0000"/><line x1="744.5" y1="661" x2="744.5" y2="697" stroke="#ffff00" stroke-width="1.2"/><rect x="742.4" y="663.5" width="4" height="4" fill="#ff0000"/><circle cx="744.4" cy="675" r="3.3" fill="#00ff00"/><rect x="742.65" y="678.75" width="3.5" height="3.5" fill="#ff0000"/><circle cx="744.4" cy="697.5" r="7.3" fill="none" stroke="#00ff00" stroke-width="3.2"/><rect x="740.9" y="692.5" width="7" height="7" fill="#ffff00"/><text x="744.4" y="713" font-size="4.6" fill="#b0b0b0" text-anchor="middle" >M-01</text><line x1="781.5" y1="661" x2="781.5" y2="697" stroke="#ffff00" stroke-width="1.2"/><rect x="779.7" y="663.5" width="4" height="4" fill="#ff0000"/><circle cx="781.7" cy="675" r="3.3" fill="#00ff00"/><rect x="779.95" y="678.75" width="3.5" height="3.5" fill="#ff0000"/><circle cx="781.7" cy="697.5" r="7.3" fill="none" stroke="#00ff00" stroke-width="3.2"/><rect x="778.2" y="692.5" width="7" height="7" fill="#ffff00"/><text x="781.7" y="713" font-size="4.6" fill="#b0b0b0" text-anchor="middle" >M-01</text><line x1="931.5" y1="661" x2="931.5" y2="697" stroke="#ffff00" stroke-width="1.2"/><rect x="929.3" y="663.5" width="4" height="4" fill="#ff0000"/><circle cx="931.3" cy="675" r="3.3" fill="#00ff00"/><rect x="929.55" y="678.75" width="3.5" height="3.5" fill="#ff0000"/><circle cx="931.3" cy="697.5" r="7.3" fill="none" stroke="#00ff00" stroke-width="3.2"/><rect x="927.8" y="692.5" width="7" height="7" fill="#ffff00"/><text x="931.3" y="713" font-size="4.6" fill="#b0b0b0" text-anchor="middle" >M-01</text><line x1="968.5" y1="661" x2="968.5" y2="697" stroke="#ffff00" stroke-width="1.2"/><rect x="966.4" y="663.5" width="4" height="4" fill="#ff0000"/><circle cx="968.4" cy="675" r="3.3" fill="#00ff00"/><rect x="966.65" y="678.75" width="3.5" height="3.5" fill="#ff0000"/><circle cx="968.4" cy="697.5" r="7.3" fill="none" stroke="#00ff00" stroke-width="3.2"/><rect x="964.9" y="692.5" width="7" height="7" fill="#ffff00"/><text x="968.4" y="713" font-size="4.6" fill="#b0b0b0" text-anchor="middle" >M-01</text><line x1="856.5" y1="662" x2="856.5" y2="699" stroke="#ffff00" stroke-width="1.2"/><rect x="854.75" y="661.5" width="3.5" height="4" fill="#ff0000"/><path d="M854.5 694 h4 v3 h-4z" fill="none" stroke="#ffff00" stroke-width="1"/><rect x="854.5" y="699.0" width="4" height="4" fill="#ff0000"/><line x1="893.5" y1="662" x2="893.5" y2="699" stroke="#ffff00" stroke-width="1.2"/><rect x="891.95" y="661.5" width="3.5" height="4" fill="#ff0000"/><path d="M891.7 694 h4 v3 h-4z" fill="none" stroke="#ffff00" stroke-width="1"/><rect x="891.7" y="699.0" width="4" height="4" fill="#ff0000"/><rect x="1082.5" y="388.5" width="418" height="131" fill="none" stroke="#ffffff" stroke-width="1.3"/><line x1="1082.5" y1="388.2" x2="1082.5" y2="401.4" stroke="#ffffff" stroke-width="1.3"/><line x1="1130.5" y1="388.2" x2="1130.5" y2="401.4" stroke="#ffffff" stroke-width="1.3"/><line x1="1177.5" y1="388.2" x2="1177.5" y2="401.4" stroke="#ffffff" stroke-width="1.3"/><line x1="1225.5" y1="388.2" x2="1225.5" y2="401.4" stroke="#ffffff" stroke-width="1.3"/><line x1="1273.5" y1="388.2" x2="1273.5" y2="401.4" stroke="#ffffff" stroke-width="1.3"/><line x1="1321.5" y1="388.2" x2="1321.5" y2="401.4" stroke="#ffffff" stroke-width="1.3"/><line x1="1368.5" y1="388.2" x2="1368.5" y2="401.4" stroke="#ffffff" stroke-width="1.3"/><line x1="1416.5" y1="388.2" x2="1416.5" y2="401.4" stroke="#ffffff" stroke-width="1.3"/><line x1="1464.5" y1="388.2" x2="1464.5" y2="401.4" stroke="#ffffff" stroke-width="1.3"/><line x1="1082.4" y1="537.5" x2="1464.6" y2="537.5" stroke="#ffffff" stroke-width="1.3"/><line x1="1082.5" y1="508.3" x2="1082.5" y2="537.5" stroke="#ffffff" stroke-width="1.3"/><line x1="1118.5" y1="519.4" x2="1118.5" y2="537.5" stroke="#ffffff" stroke-width="1.3"/><line x1="1130.5" y1="508.3" x2="1130.5" y2="537.5" stroke="#ffffff" stroke-width="1.3"/><line x1="1166.5" y1="519.4" x2="1166.5" y2="537.5" stroke="#ffffff" stroke-width="1.3"/><line x1="1177.5" y1="508.3" x2="1177.5" y2="537.5" stroke="#ffffff" stroke-width="1.3"/><line x1="1213.5" y1="519.4" x2="1213.5" y2="537.5" stroke="#ffffff" stroke-width="1.3"/><line x1="1225.5" y1="508.3" x2="1225.5" y2="537.5" stroke="#ffffff" stroke-width="1.3"/><line x1="1261.5" y1="519.4" x2="1261.5" y2="537.5" stroke="#ffffff" stroke-width="1.3"/><line x1="1273.5" y1="508.3" x2="1273.5" y2="537.5" stroke="#ffffff" stroke-width="1.3"/><line x1="1309.5" y1="519.4" x2="1309.5" y2="537.5" stroke="#ffffff" stroke-width="1.3"/><line x1="1321.5" y1="508.3" x2="1321.5" y2="537.5" stroke="#ffffff" stroke-width="1.3"/><line x1="1357.5" y1="519.4" x2="1357.5" y2="537.5" stroke="#ffffff" stroke-width="1.3"/><line x1="1368.5" y1="508.3" x2="1368.5" y2="537.5" stroke="#ffffff" stroke-width="1.3"/><line x1="1404.5" y1="519.4" x2="1404.5" y2="537.5" stroke="#ffffff" stroke-width="1.3"/><line x1="1416.5" y1="508.3" x2="1416.5" y2="537.5" stroke="#ffffff" stroke-width="1.3"/><line x1="1452.5" y1="519.4" x2="1452.5" y2="537.5" stroke="#ffffff" stroke-width="1.3"/><line x1="1464.5" y1="508.3" x2="1464.5" y2="537.5" stroke="#ffffff" stroke-width="1.3"/><line x1="1482.5" y1="401.4" x2="1482.5" y2="508.3" stroke="#ffffff" stroke-width="1.3"/><line x1="1082.4" y1="401.5" x2="1130.3" y2="401.5" stroke="#00ff00" stroke-width="1.3"/><line x1="1082.4" y1="508.5" x2="1130.3" y2="508.5" stroke="#00ff00" stroke-width="1.3"/><line x1="1177.5" y1="401.5" x2="1368.3" y2="401.5" stroke="#00ff00" stroke-width="1.3"/><line x1="1177.5" y1="508.5" x2="1368.3" y2="508.5" stroke="#00ff00" stroke-width="1.3"/><line x1="1416.5" y1="401.5" x2="1464.6" y2="401.5" stroke="#00ff00" stroke-width="1.3"/><line x1="1416.5" y1="508.5" x2="1464.6" y2="508.5" stroke="#00ff00" stroke-width="1.3"/><line x1="1130.3" y1="508.5" x2="1166.4" y2="508.5" stroke="#00ff00" stroke-width="1.3"/><line x1="1368.3" y1="508.5" x2="1404.4" y2="508.5" stroke="#00ff00" stroke-width="1.3"/><line x1="1130.3" y1="401.5" x2="1177.5" y2="401.5" stroke="#ffffff" stroke-width="1.3"/><line x1="1368.3" y1="401.5" x2="1416.5" y2="401.5" stroke="#ffffff" stroke-width="1.3"/><line x1="1464.6" y1="401.5" x2="1482.7" y2="401.5" stroke="#ffffff" stroke-width="1.3"/><line x1="1166.4" y1="508.5" x2="1177.5" y2="508.5" stroke="#ffffff" stroke-width="1.3"/><line x1="1404.4" y1="508.5" x2="1416.5" y2="508.5" stroke="#ffffff" stroke-width="1.3"/><line x1="1464.6" y1="508.5" x2="1482.7" y2="508.5" stroke="#ffffff" stroke-width="1.3"/><line x1="1082.5" y1="401.4" x2="1082.5" y2="508.3" stroke="#00ff00" stroke-width="1.3"/><line x1="1177.5" y1="401.4" x2="1177.5" y2="508.3" stroke="#00ff00" stroke-width="1.3"/><line x1="1225.5" y1="401.4" x2="1225.5" y2="508.3" stroke="#00ff00" stroke-width="1.3"/><line x1="1273.5" y1="401.4" x2="1273.5" y2="508.3" stroke="#00ff00" stroke-width="1.3"/><line x1="1321.5" y1="401.4" x2="1321.5" y2="508.3" stroke="#00ff00" stroke-width="1.3"/><line x1="1416.5" y1="401.4" x2="1416.5" y2="508.3" stroke="#00ff00" stroke-width="1.3"/><line x1="1464.5" y1="401.4" x2="1464.5" y2="508.3" stroke="#00ff00" stroke-width="1.3"/><line x1="1130.5" y1="401.4" x2="1130.5" y2="437.4" stroke="#ffffff" stroke-width="1.3"/><line x1="1130.5" y1="437.4" x2="1130.5" y2="508.3" stroke="#00ff00" stroke-width="1.3"/><line x1="1166.5" y1="401.4" x2="1166.5" y2="437.4" stroke="#ffffff" stroke-width="1.3"/><line x1="1166.5" y1="437.4" x2="1166.5" y2="473.5" stroke="#00ff00" stroke-width="1.3"/><line x1="1166.5" y1="473.5" x2="1166.5" y2="508.3" stroke="#ffffff" stroke-width="1.3"/><line x1="1130.3" y1="437.5" x2="1166.4" y2="437.5" stroke="#00ff00" stroke-width="1.3"/><line x1="1130.3" y1="473.5" x2="1166.4" y2="473.5" stroke="#00ff00" stroke-width="1.3"/><line x1="1368.5" y1="401.4" x2="1368.5" y2="461" stroke="#ffffff" stroke-width="1.3"/><line x1="1368.5" y1="461" x2="1368.5" y2="508.3" stroke="#00ff00" stroke-width="1.3"/><line x1="1404.5" y1="401.4" x2="1404.5" y2="461" stroke="#ffffff" stroke-width="1.3"/><line x1="1404.5" y1="461" x2="1404.5" y2="485" stroke="#00ff00" stroke-width="1.3"/><line x1="1404.5" y1="485" x2="1404.5" y2="508.3" stroke="#ffffff" stroke-width="1.3"/><line x1="1368.3" y1="461.5" x2="1404.4" y2="461.5" stroke="#00ff00" stroke-width="1.3"/><line x1="1368.3" y1="485.5" x2="1404.4" y2="485.5" stroke="#00ff00" stroke-width="1.3"/><line x1="1082.5" y1="380" x2="1082.5" y2="388" stroke="#ff0000" stroke-width="1.2"/><line x1="1225.5" y1="380" x2="1225.5" y2="388" stroke="#ff0000" stroke-width="1.2"/><line x1="1273.5" y1="380" x2="1273.5" y2="388" stroke="#ff0000" stroke-width="1.2"/><line x1="1416.5" y1="380" x2="1416.5" y2="388" stroke="#ff0000" stroke-width="1.2"/><path d="M1079.9 391h5l-1.5 2v3h-2v-3z" fill="#ff0000"/><path d="M1175.0 391h5l-1.5 2v3h-2v-3z" fill="#ff0000"/><path d="M1223.0 391h5l-1.5 2v3h-2v-3z" fill="#ff0000"/><path d="M1271.0 391h5l-1.5 2v3h-2v-3z" fill="#ff0000"/><path d="M1318.5 391h5l-1.5 2v3h-2v-3z" fill="#ff0000"/><path d="M1414.0 391h5l-1.5 2v3h-2v-3z" fill="#ff0000"/><rect x="1128.55" y="434.0" width="3.5" height="3" fill="#ff0000"/><rect x="1128.55" y="469.5" width="3.5" height="3" fill="#ff0000"/><rect x="1366.55" y="457.25" width="3.5" height="3.5" fill="#ff0000"/><rect x="1366.55" y="480.25" width="3.5" height="3.5" fill="#ff0000"/><text x="1112.4" y="397.5" font-size="4.6" fill="#b0b0b0" text-anchor="middle" >01</text><text x="1106.4" y="457" font-size="4.6" fill="#b8b8b8" text-anchor="middle" >GCK-01</text><text x="1106.4" y="611" font-size="4.6" fill="#b0b0b0" text-anchor="middle" >01</text><text x="1160.3" y="397.5" font-size="4.6" fill="#b0b0b0" text-anchor="middle" >02</text><text x="1154.3" y="611" font-size="4.6" fill="#b0b0b0" text-anchor="middle" >02</text><text x="1207.5" y="397.5" font-size="4.6" fill="#b0b0b0" text-anchor="middle" >03</text><text x="1201.5" y="457" font-size="4.6" fill="#b8b8b8" text-anchor="middle" >GCK-01</text><text x="1201.5" y="611" font-size="4.6" fill="#b0b0b0" text-anchor="middle" >03</text><text x="1255.5" y="397.5" font-size="4.6" fill="#b0b0b0" text-anchor="middle" >04</text><text x="1249.5" y="457" font-size="4.6" fill="#b8b8b8" text-anchor="middle" >GCK-01</text><text x="1249.5" y="611" font-size="4.6" fill="#b0b0b0" text-anchor="middle" >04</text><text x="1303.5" y="397.5" font-size="4.6" fill="#b0b0b0" text-anchor="middle" >05</text><text x="1297.5" y="457" font-size="4.6" fill="#b8b8b8" text-anchor="middle" >GCK-01</text><text x="1297.5" y="611" font-size="4.6" fill="#b0b0b0" text-anchor="middle" >05</text><text x="1351" y="397.5" font-size="4.6" fill="#b0b0b0" text-anchor="middle" >06</text><text x="1345" y="457" font-size="4.6" fill="#b8b8b8" text-anchor="middle" >GCK-01</text><text x="1345" y="611" font-size="4.6" fill="#b0b0b0" text-anchor="middle" >06</text><text x="1398.3" y="397.5" font-size="4.6" fill="#b0b0b0" text-anchor="middle" >07</text><text x="1392.3" y="611" font-size="4.6" fill="#b0b0b0" text-anchor="middle" >07</text><text x="1446.5" y="397.5" font-size="4.6" fill="#b0b0b0" text-anchor="middle" >08</text><text x="1440.5" y="457" font-size="4.6" fill="#b8b8b8" text-anchor="middle" >GCK-01</text><text x="1440.5" y="611" font-size="4.6" fill="#b0b0b0" text-anchor="middle" >08</text><text x="1148" y="457" font-size="4.6" fill="#b8b8b8" text-anchor="middle" >GCK-02</text><text x="1148" y="492" font-size="4.6" fill="#b8b8b8" text-anchor="middle" >GCK-03</text><text x="1386" y="475" font-size="4.6" fill="#b8b8b8" text-anchor="middle" >GCK-07</text><text x="1386" y="498" font-size="4.6" fill="#b8b8b8" text-anchor="middle" >GCK-08</text><path d="M1082.5 593.5 H1482.5 V653.5 H1082.5 Z" fill="none" stroke="#ffffff" stroke-width="1.3"/><line x1="1082.4" y1="671.5" x2="1464.6" y2="671.5" stroke="#ffffff" stroke-width="1.3"/><line x1="1082.5" y1="593.1" x2="1082.5" y2="671.4" stroke="#ffffff" stroke-width="1.3"/><line x1="1130.5" y1="593.1" x2="1130.5" y2="671.4" stroke="#ffffff" stroke-width="1.3"/><line x1="1177.5" y1="593.1" x2="1177.5" y2="671.4" stroke="#ffffff" stroke-width="1.3"/><line x1="1225.5" y1="593.1" x2="1225.5" y2="671.4" stroke="#ffffff" stroke-width="1.3"/><line x1="1273.5" y1="593.1" x2="1273.5" y2="671.4" stroke="#ffffff" stroke-width="1.3"/><line x1="1321.5" y1="593.1" x2="1321.5" y2="671.4" stroke="#ffffff" stroke-width="1.3"/><line x1="1368.5" y1="593.1" x2="1368.5" y2="671.4" stroke="#ffffff" stroke-width="1.3"/><line x1="1416.5" y1="593.1" x2="1416.5" y2="671.4" stroke="#ffffff" stroke-width="1.3"/><line x1="1464.5" y1="593.1" x2="1464.5" y2="671.4" stroke="#ffffff" stroke-width="1.3"/><line x1="895.5" y1="727" x2="895.5" y2="765" stroke="#ffffff" stroke-width="1.3"/><line x1="902.5" y1="727" x2="902.5" y2="765" stroke="#ffffff" stroke-width="1.3"/><line x1="1066.5" y1="727" x2="1066.5" y2="765" stroke="#ffffff" stroke-width="1.3"/><line x1="1104.5" y1="727" x2="1104.5" y2="765" stroke="#ffffff" stroke-width="1.3"/><line x1="1141.5" y1="727" x2="1141.5" y2="765" stroke="#ffffff" stroke-width="1.3"/><line x1="1178.5" y1="727" x2="1178.5" y2="765" stroke="#ffffff" stroke-width="1.3"/><line x1="1216.5" y1="727" x2="1216.5" y2="765" stroke="#ffffff" stroke-width="1.3"/><line x1="1253.5" y1="727" x2="1253.5" y2="765" stroke="#ffffff" stroke-width="1.3"/><line x1="1427.5" y1="727" x2="1427.5" y2="746.3" stroke="#ffffff" stroke-width="1.3"/><line x1="1351.5" y1="746.3" x2="1351.5" y2="765" stroke="#ffffff" stroke-width="1.3"/><line x1="1452.5" y1="746.3" x2="1452.5" y2="765" stroke="#ffffff" stroke-width="1.3"/><line x1="1482.5" y1="746.3" x2="1482.5" y2="765" stroke="#ffffff" stroke-width="1.8"/><line x1="895.5" y1="735.5" x2="1253.3" y2="735.5" stroke="#ffffff" stroke-width="1.3"/><line x1="895.5" y1="742.5" x2="1141.3" y2="742.5" stroke="#ffffff" stroke-width="1.3"/><line x1="895.5" y1="750.5" x2="1253.3" y2="750.5" stroke="#ffffff" stroke-width="1.3"/><line x1="895.5" y1="757.5" x2="1141.3" y2="757.5" stroke="#ffffff" stroke-width="1.3"/><line x1="1427.5" y1="737.5" x2="1510" y2="737.5" stroke="#ffffff" stroke-width="1.3"/><line x1="1253.3" y1="746.5" x2="1510" y2="746.5" stroke="#ffffff" stroke-width="1.3"/><line x1="1452.5" y1="755.5" x2="1510" y2="755.5" stroke="#ffffff" stroke-width="1.3"/><text x="907" y="733" font-size="5.2" fill="#d0d0d0" text-anchor="start" font-weight="bold">Revision Description</text><text x="1079" y="733" font-size="5.2" fill="#d0d0d0" text-anchor="start" font-weight="bold">Date</text><text x="1117" y="733" font-size="5.2" fill="#d0d0d0" text-anchor="start" font-weight="bold">Name</text><text x="1148" y="744" font-size="5.2" fill="#d0d0d0" text-anchor="start" font-weight="bold">Drawn By</text><text x="1146" y="759" font-size="5.2" fill="#d0d0d0" text-anchor="start" font-weight="bold">Checked By</text><text x="1192" y="733" font-size="5.2" fill="#d0d0d0" text-anchor="start" font-weight="bold">Date</text><text x="1227" y="733" font-size="5.2" fill="#d0d0d0" text-anchor="start" font-weight="bold">Name</text><text x="1257" y="734.5" font-size="5.2" fill="#d0d0d0" text-anchor="start" font-weight="bold">Project Name</text><text x="1257" y="741.5" font-size="5.2" fill="#d0d0d0" text-anchor="start" font-weight="bold">Substation 0.4kV工程</text><text x="1257" y="752.5" font-size="5.2" fill="#d0d0d0" text-anchor="start" font-weight="bold">Job Number</text><text x="1356" y="752.5" font-size="5.2" fill="#d0d0d0" text-anchor="start" font-weight="bold">Drawing Number</text><text x="1457" y="752.5" font-size="5.2" fill="#d0d0d0" text-anchor="start" font-weight="bold">Page</text><text x="1457" y="761.5" font-size="5.2" fill="#d0d0d0" text-anchor="start" font-weight="bold">of</text><text x="896" y="738.5" font-size="5.2" fill="#d0d0d0" text-anchor="start" font-weight="bold">A</text><text x="896" y="745.5" font-size="5.2" fill="#d0d0d0" text-anchor="start" font-weight="bold">B</text><text x="896" y="753.5" font-size="5.2" fill="#d0d0d0" text-anchor="start" font-weight="bold">C</text><text x="896" y="760.5" font-size="5.2" fill="#d0d0d0" text-anchor="start" font-weight="bold">D</text><circle cx="890" cy="830" r="4.5" fill="#555" stroke="#999" stroke-width="1"/></svg>
<div class="a" style="left:1515px;top:73px;width:266px;height:124px;background:#f0f0f0;border:1px solid #9a9a9a;box-shadow:0 0 4px rgba(0,0,0,0.25)"></div>
<div class="a" style="left:1516px;top:74px;width:264px;height:31px;background:#fff"></div>
<svg class="a" style="left:1520px;top:80px" width="15" height="19" viewBox="0 0 15 19"><path d="M4 18q-4-6-2-12 2-5 5-5l1 4 3-4q2 4 1 9 0 6-3 8z" fill="#bbb" stroke="#888" stroke-width="0.6"/></svg>
<div class="a" style="left:1542px;top:80px;font-size:15px;color:#999;white-space:nowrap">选择元...</div>
<div class="a" style="left:1628px;top:88px;width:12px;height:1px;background:#777"></div>
<div class="a" style="left:1686px;top:83px;width:12px;height:12px;border:1px solid #ddd"></div>
<svg class="a" style="left:1744px;top:83px" width="13" height="13" viewBox="0 0 13 13"><path d="M0.5 0.5L12.5 12.5M12.5 0.5L0.5 12.5" stroke="#666" stroke-width="1"/></svg>
<div class="a" style="left:1532px;top:114px;width:110px;height:26px;border:1px solid;border-color:#a0a0a0 #fff #fff #a0a0a0"></div>
<div class="a" style="left:1535px;top:117px;width:20px;height:20px;border:1px solid #2a60d0;background:linear-gradient(#fcc888,#f8b060 50%,#fde090)"></div>
<div class="a" style="left:1532px;top:149px;width:110px;height:26px;border:1px solid;border-color:#a0a0a0 #fff #fff #a0a0a0"></div>
<div class="a" style="left:1535px;top:152px;width:20px;height:20px;border:1px solid #2a60d0;background:linear-gradient(#fcc888,#f8b060 50%,#fde090)"></div>
<svg class="a" style="left:1537px;top:119px" width="16" height="16" viewBox="0 0 16 16"><circle cx="8" cy="8" r="4.5" fill="none" stroke="#1a6ee8" stroke-width="1.5"/><path d="M8 0v16M0 8h16" stroke="#1a6ee8" stroke-width="1.5"/></svg>
<svg class="a" style="left:1558px;top:119px" width="14" height="14" viewBox="0 0 14 14"><rect x="1.5" y="3" width="11" height="8" rx="1" fill="#fff" stroke="#1a6ee8" stroke-width="1.3"/></svg>
<svg class="a" style="left:1579px;top:119px" width="15" height="14" viewBox="0 0 15 14"><path d="M4 3.5h10l-3 7H1z" fill="#fff" stroke="#1a6ee8" stroke-width="1.3"/></svg>
<svg class="a" style="left:1600px;top:119px" width="14" height="14" viewBox="0 0 14 14"><circle cx="7" cy="7" r="5.5" fill="#fff" stroke="#1a6ee8" stroke-width="1.3"/></svg>
<svg class="a" style="left:1621px;top:119px" width="14" height="14" viewBox="0 0 14 14"><path d="M2 12L12 2" stroke="#6a7ab8" stroke-width="1.2"/></svg>
<svg class="a" style="left:1537px;top:153px" width="16" height="17" viewBox="0 0 16 17"><path d="M7 1v14M0 8h14M2 3l10 10M12 3L2 13" stroke="#3ac0f8" stroke-width="1"/><path d="M9 9v7l2-2 2 3 1-1-2-3h3z" fill="#fff" stroke="#1a6ee8" stroke-width="0.7"/></svg>
<svg class="a" style="left:1558px;top:154px" width="14" height="14" viewBox="0 0 14 14"><path d="M7 1v12M1 7h12" stroke="#1a6ee8" stroke-width="3"/><path d="M7 1v12M1 7h12" stroke="#fff" stroke-width="1"/></svg>
<svg class="a" style="left:1579px;top:154px" width="14" height="14" viewBox="0 0 14 14"><rect x="1" y="5" width="12" height="4" rx="1" fill="#6ab8f8" stroke="#1a6ee8" stroke-width="1"/></svg>
<svg class="a" style="left:1600px;top:154px" width="14" height="14" viewBox="0 0 14 14"><rect x="1" y="1" width="12" height="12" fill="#fff" stroke="#1a6ee8"/><path d="M13 1V13H1Z" fill="#1a5ee8"/></svg>
<svg class="a" style="left:1621px;top:153px" width="15" height="16" viewBox="0 0 15 16"><circle cx="7" cy="7" r="6" fill="#2a80e8"/><path d="M3 5q3-3 5 1 2 3-1 5" fill="#4ab030"/><path d="M8 9v6l2-2 2 3" fill="#fff" stroke="#333" stroke-width="0.6"/></svg>
<svg class="a" style="left:1697px;top:118px" width="20" height="20" viewBox="0 0 20 20"><circle cx="10" cy="10" r="8.5" fill="none" stroke="#e0a0a0" stroke-width="2.2"/><rect x="5" y="5" width="10" height="10" fill="#8a8ae8" stroke="#2a50d0" stroke-width="1"/><path d="M5 5l10 10" stroke="#c04040" stroke-width="1"/></svg>
<svg class="a" style="left:1698px;top:153px" width="17" height="23" viewBox="0 0 17 23"><rect x="0.5" y="0.5" width="14" height="15" fill="#ddd" stroke="#aaa"/><path d="M6 7v14l3-3 3 5 2-1-3-5h4z" fill="#777"/></svg>
<svg class="a" style="left:1746px;top:171px" width="10" height="6" viewBox="0 0 10 6"><path d="M0 0H10L5 6Z" fill="#000"/></svg>
<div class="a" style="left:0;top:962px;width:1920px;height:35px;background:#f0f0f0"></div>
<div class="a" style="left:0;top:963px;width:447px;height:33px;border-radius:5px;background:linear-gradient(#ffffff,#f8f8f8 30%,#ebebeb 75%,#d9d9d9)"></div>
<div class="a" style="left:3px;top:970px;width:2px;height:2px;background:#9a9a9a"></div><div class="a" style="left:3px;top:975px;width:2px;height:2px;background:#9a9a9a"></div><div class="a" style="left:3px;top:980px;width:2px;height:2px;background:#9a9a9a"></div><div class="a" style="left:3px;top:985px;width:2px;height:2px;background:#9a9a9a"></div><div class="a" style="left:3px;top:990px;width:2px;height:2px;background:#9a9a9a"></div>
<div class="a" style="left:10px;top:970px;font-size:17px;font-weight:bold">X</div>
<div class="a" style="left:29px;top:969px;width:119px;height:21px;background:#fff;border:1px solid #a0a0a8"><span class="a" style="left:5px;top:2px;font-size:14px;color:#6d6d6d;white-space:nowrap">197.2588</span></div>
<div class="a" style="left:158px;top:970px;font-size:17px;font-weight:bold">Y</div>
<div class="a" style="left:177px;top:969px;width:119px;height:21px;background:#fff;border:1px solid #a0a0a8"><span class="a" style="left:5px;top:2px;font-size:14px;color:#6d6d6d;white-space:nowrap">-44.0185</span></div>
<div class="a" style="left:307px;top:970px;font-size:17px;font-weight:bold">Z</div>
<div class="a" style="left:326px;top:969px;width:119px;height:21px;background:#fff;border:1px solid #a0a0a8"><span class="a" style="left:5px;top:2px;font-size:14px;color:#6d6d6d;white-space:nowrap">0.0000</span></div>
<div class="a" style="left:151px;top:965px;width:2px;height:28px;border-left:1px solid #a0a0a0;border-right:1px solid #fff"></div>
<div class="a" style="left:300px;top:965px;width:2px;height:28px;border-left:1px solid #a0a0a0;border-right:1px solid #fff"></div>
<div class="a" style="left:0;top:997px;width:1920px;height:33px;background:#f0f0f0;border-top:1px solid #d0d0d0"></div>
<div class="a" style="left:0;top:998px;width:253px;height:32px;border-left:1px solid #b0b0b0;overflow:hidden"><span class="a" style="left:3px;top:7px;font-size:14px;white-space:nowrap">选择元素 &gt; 标识要添加到选择集中的元素</span></div>
<div class="a" style="left:260px;top:1000px;width:2px;height:2px;background:#9a9a9a"></div><div class="a" style="left:260px;top:1005px;width:2px;height:2px;background:#9a9a9a"></div><div class="a" style="left:260px;top:1010px;width:2px;height:2px;background:#9a9a9a"></div><div class="a" style="left:260px;top:1015px;width:2px;height:2px;background:#9a9a9a"></div><div class="a" style="left:260px;top:1020px;width:2px;height:2px;background:#9a9a9a"></div>
<div class="a" style="left:266px;top:998px;width:36px;height:31px;border:1px solid #c8c8c8;border-left-color:#a0a0a0;border-top-color:#a0a0a0"></div>
<svg class="a" style="left:294px;top:999px" width="6" height="4" viewBox="0 0 6 4"><path d="M0 4L3 0 6 4z" fill="#000"/></svg>
<div class="a" style="left:1309px;top:998px;width:1px;height:32px;background:#b8b8b8"></div>
<div class="a" style="left:1311px;top:998px;width:33px;height:31px;border:1px solid #cfcfcf;border-left-color:#b0b0b0;border-top-color:#b0b0b0"></div>
<div class="a" style="left:1347px;top:998px;width:33px;height:31px;border:1px solid #cfcfcf;border-left-color:#b0b0b0;border-top-color:#b0b0b0"></div>
<div class="a" style="left:1383px;top:998px;width:149px;height:31px;border:1px solid #cfcfcf;border-left-color:#b0b0b0;border-top-color:#b0b0b0"></div>
<div class="a" style="left:1535px;top:998px;width:131px;height:31px;border:1px solid #cfcfcf;border-left-color:#b0b0b0;border-top-color:#b0b0b0"></div>
<div class="a" style="left:1668px;top:998px;width:34px;height:31px;border:1px solid #cfcfcf;border-left-color:#b0b0b0;border-top-color:#b0b0b0"></div>
<div class="a" style="left:1704px;top:998px;width:34px;height:31px;border:1px solid #cfcfcf;border-left-color:#b0b0b0;border-top-color:#b0b0b0"></div>
<div class="a" style="left:1740px;top:998px;width:34px;height:31px;border:1px solid #cfcfcf;border-left-color:#b0b0b0;border-top-color:#b0b0b0"></div>
<div class="a" style="left:1776px;top:998px;width:34px;height:31px;border:1px solid #cfcfcf;border-left-color:#b0b0b0;border-top-color:#b0b0b0"></div>
<div class="a" style="left:1812px;top:998px;width:34px;height:31px;border:1px solid #cfcfcf;border-left-color:#b0b0b0;border-top-color:#b0b0b0"></div>
<div class="a" style="left:1848px;top:998px;width:34px;height:31px;border:1px solid #cfcfcf;border-left-color:#b0b0b0;border-top-color:#b0b0b0"></div>
<div class="a" style="left:1884px;top:998px;width:34px;height:31px;border:1px solid #cfcfcf;border-left-color:#b0b0b0;border-top-color:#b0b0b0"></div>
<svg class="a" style="left:1315px;top:1001px" width="25" height="25" viewBox="0 0 25 25"><path d="M4 21h8l5-10V4" fill="none" stroke="#333" stroke-width="1"/><g fill="#fff" stroke="#2a60d0" stroke-width="1.3"><circle cx="4" cy="21" r="2.6"/><circle cx="13" cy="19" r="2.6"/><circle cx="17" cy="4" r="2.6"/></g></svg>
<svg class="a" style="left:1357px;top:1006px" width="12" height="12" viewBox="0 0 12 12"><path d="M3 5V3q3-3 6 0v2" fill="none" stroke="#555" stroke-width="1.2"/><rect x="1" y="5" width="10" height="6" fill="#b8a030" stroke="#6a6010" stroke-width="0.8"/></svg>
<div class="a" style="left:1385px;top:1005px;font-size:14.5px">Default</div>
<svg class="a" style="left:1752px;top:1005px" width="14" height="15" viewBox="0 0 14 15"><path d="M2 2h9q-2 5 0 11H2q2-6 0-11z" fill="#fff" stroke="#999" stroke-width="1.1"/></svg>
<svg class="a" style="left:1785px;top:1004px" width="16" height="15" viewBox="0 0 16 15"><path d="M1 8L8 1l7 7M3 7v7h10V7" fill="#eee" stroke="#999" stroke-width="1.1"/></svg>
<svg class="a" style="left:1858px;top:1005px" width="14" height="14" viewBox="0 0 14 14"><path d="M1 3l9-2 3 2v9l-9 1-3-2z" fill="#eee" stroke="#999" stroke-width="1"/><rect x="4" y="4" width="6" height="6" fill="none" stroke="#888"/></svg>
<svg class="a" style="left:1892px;top:1003px" width="17" height="17" viewBox="0 0 17 17"><rect x="0" y="0" width="17" height="17" fill="#ccc"/><circle cx="8.5" cy="6" r="3.5" fill="#fff"/><path d="M2 17q0-7 6.5-7t6.5 7z" fill="#fff"/></svg>
</body></html>
